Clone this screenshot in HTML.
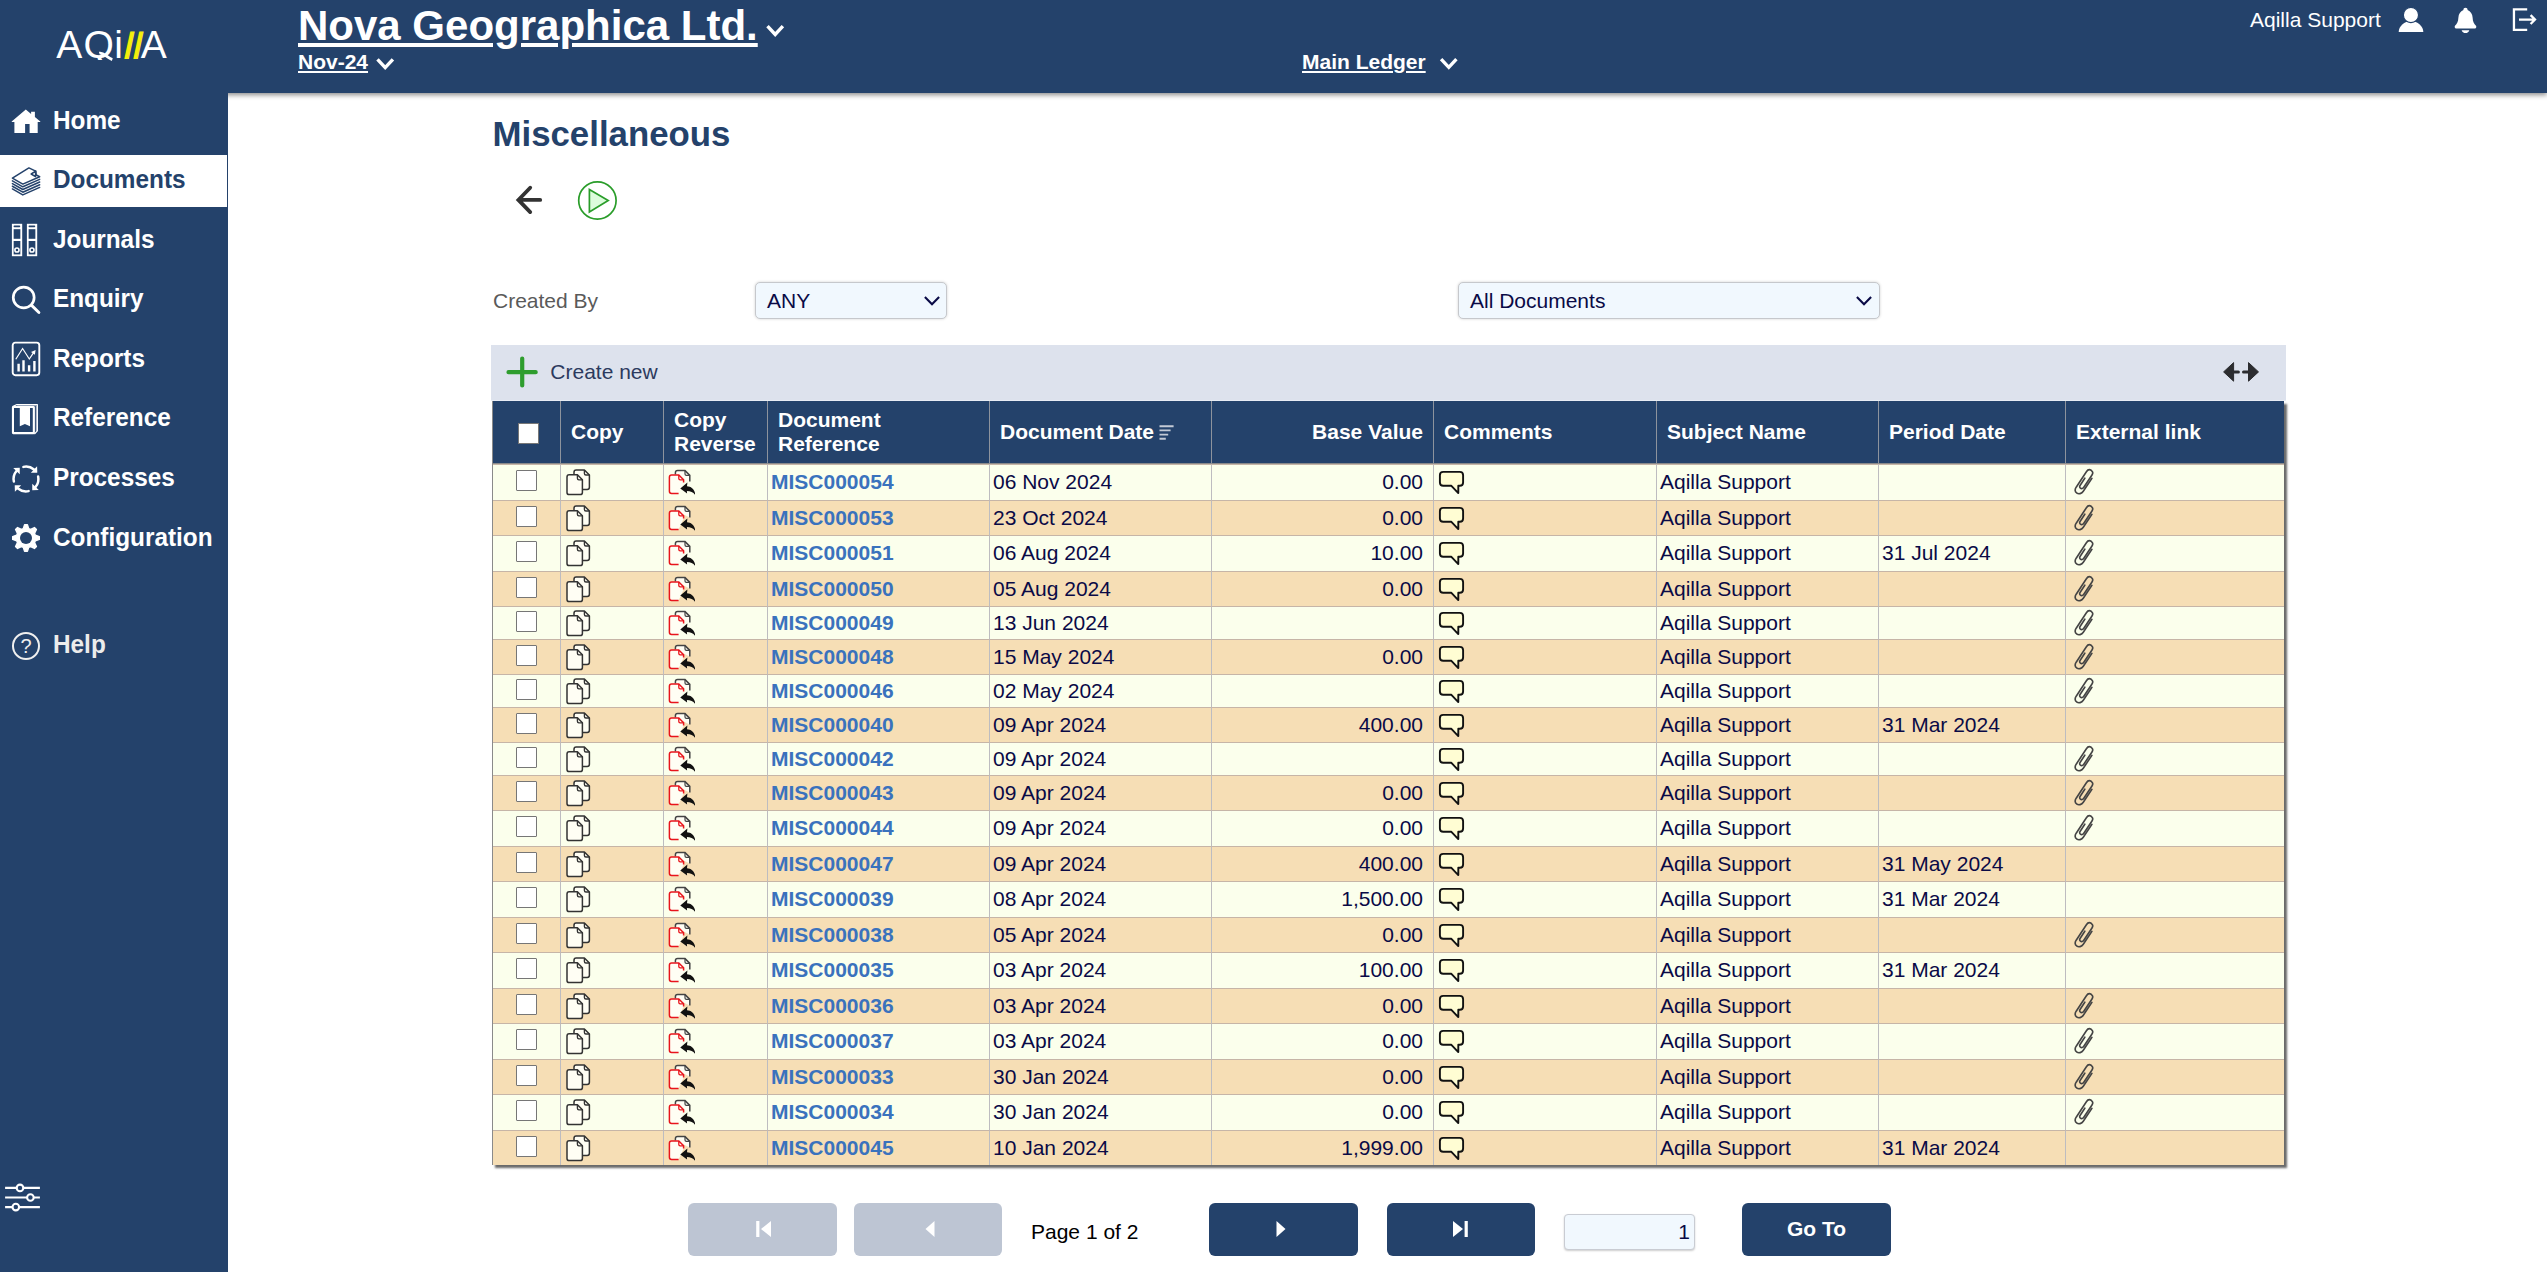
<!DOCTYPE html>
<html lang="en"><head><meta charset="utf-8"><title>Miscellaneous - Aqilla</title>
<style>
html,body{margin:0;padding:0}
body{width:2547px;height:1272px;overflow:hidden;background:#fff;font-family:"Liberation Sans",Arial,Helvetica,sans-serif;font-size:21px;color:#0a0a46;position:relative}
a{text-decoration:none;color:inherit}
svg{display:block}
#top{position:absolute;left:0;top:0;width:2547px;height:93px;background:#24426b;box-shadow:0 2px 5px rgba(0,0,0,.46);z-index:2;color:#fff}
#side{position:absolute;left:0;top:0;width:228px;height:1272px;background:#24426b;z-index:3;color:#fff}
#top svg,#side svg{position:absolute}
.company{position:absolute;left:298px;top:2px;font-size:42px;font-weight:bold;line-height:48px;text-decoration:underline;text-decoration-thickness:4px;text-underline-offset:3px;color:#fff;white-space:nowrap}
.period{position:absolute;left:298px;top:50px;font-size:21px;font-weight:bold;line-height:24px;text-decoration:underline;text-decoration-thickness:2px;text-underline-offset:2px;color:#fff}
.ledger{position:absolute;left:1302px;top:50px;font-size:21px;font-weight:bold;line-height:24px;text-decoration:underline;text-decoration-thickness:2px;text-underline-offset:2px;color:#fff;white-space:nowrap}
.user{position:absolute;left:2250px;top:8px;font-size:21px;line-height:24px;color:#fff;white-space:nowrap}
.logo{position:absolute;left:56px;top:24.4px;width:120px;height:35.2px;overflow:hidden;font-size:39px;line-height:42px;color:#fff;white-space:nowrap}
.logo span{position:absolute;top:0}
.logo .sl{color:#f4ef0c;-webkit-text-stroke:1.3px #f4ef0c;transform:skewX(4.6deg) scaleY(0.915);transform-origin:0 34.5px}
.nav{position:absolute;left:0;width:227px;height:52px;display:block;color:#fff}
.nav span{position:absolute;left:53px;top:-1px;line-height:52px;font-size:24.35px;font-weight:bold;white-space:nowrap;transform:scaleY(1.035);transform-origin:0 66%}
.nav.active{background:#fff;color:#24426b}
.nav.help{color:#ececec}
.title{position:absolute;left:492.5px;top:113px;margin:0;font-size:34.8px;line-height:42px;font-weight:bold;color:#24426b;white-space:nowrap}
.abs{position:absolute}
.lbl{position:absolute;left:493px;top:289px;line-height:24px;color:#5a5a5a;font-size:21px}
.sel{position:absolute;top:282px;height:37px;border:1px solid #c6c8cc;border-radius:5px;background:#f1f8fe;box-shadow:0 0 3px rgba(0,0,0,.18);box-sizing:border-box}
.sel span{position:absolute;left:11px;top:0;line-height:36px;font-size:21px;color:#0a0a46}
.sel svg{position:absolute;right:5px;top:12px}
.toolbar{position:absolute;left:491px;top:345px;width:1795px;height:55px;background:#dde2ed;border-bottom:1px solid #e8ecf4}
.toolbar .cn{position:absolute;left:59.3px;top:0;line-height:54px;color:#2c3a5e;font-size:21px}
.toolbar svg{position:absolute}
.grid{position:absolute;left:492px;top:401px;width:1791px;height:764px;border-left:1px solid #8a8a8a;box-shadow:2.5px 2.5px 2px #6a6a6a;background:#24426b}
.hrow{position:absolute;left:0;top:0;width:1791px;height:63px;background:#24426b;color:#fff;font-weight:bold;font-size:21px}
.hc{position:absolute;top:0;height:63px;box-sizing:border-box;border-left:1px solid #8d939d;border-bottom:1px solid #8a8a8a;display:flex;align-items:center;padding-left:10px;padding-bottom:0;line-height:24.3px}
.hc:first-child{border-left:0}
.hc.r{justify-content:flex-end;padding-right:10px}
.hcb{display:block;width:19px;height:19px;background:#fff;border:1px solid #777;margin-left:15px;margin-top:2px}
.ht svg{display:inline-block;margin-left:5px;vertical-align:-2px}
.row{position:absolute;left:0;width:1791px;white-space:nowrap}
.row.a{background:#fbffec}
.row.b{background:#f6deb5}
.c{position:absolute;top:0;height:100%;box-sizing:border-box;border-left:1px solid #bdbcc0;border-top:1px solid #c6b5a7;padding-left:3px;overflow:hidden}
.c0{border-left:0}
.c5{text-align:right;padding-right:10px}
.c svg{position:absolute}
.cb{position:absolute;left:23px;top:5px;width:19px;height:19px;background:#fff;border:1px solid #767676;border-radius:1px}
.ref{color:#3a72bd;font-weight:bold}
.pbtn{position:absolute;top:1203px;width:148px;height:53px;border-radius:6px;background:#24426b;color:#fff}
.pbtn.dis{background:#bdc5d3}
.pbtn svg{position:absolute}
.goto{position:absolute;left:0;width:149px;text-align:center;line-height:51px;font-weight:bold;font-size:21px}
.pg{position:absolute;left:1031px;top:1220px;line-height:24px;color:#000;white-space:nowrap}
.pin{position:absolute;left:1564px;top:1214px;width:131px;height:36px;box-sizing:border-box;border:1px solid #c9ccd3;border-radius:4px;background:#f1f8fe;box-shadow:0 1px 2px rgba(0,0,0,.2);text-align:right;padding-right:4px;line-height:33px;color:#0a0a46}

.row.s svg,.row.s .cb{margin-top:-1px}

</style></head>
<body>
<div id="top">
<a class="company" href="#">Nova Geographica Ltd.</a><svg style="left:764px;top:23px" width="24" height="18" viewBox="764 23 24 18"><path d="M767.5 26.2 L775.2 34.5 L782.9 26.2" fill="none" stroke="#fff" stroke-width="3.4" stroke-linecap="butt" stroke-linejoin="miter"/></svg>
<a class="period" href="#">Nov-24</a><svg style="left:374px;top:56px" width="24" height="18" viewBox="374 56 24 18"><path d="M377.5 59.3 L385.2 67.6 L392.9 59.3" fill="none" stroke="#fff" stroke-width="3.4" stroke-linecap="butt" stroke-linejoin="miter"/></svg>
<a class="ledger" href="#">Main Ledger</a><svg style="left:1438px;top:56px" width="24" height="18" viewBox="1438 56 24 18"><path d="M1441.1 59.2 L1448.8 67.3 L1456.4 59.2" fill="none" stroke="#fff" stroke-width="3.4" stroke-linecap="butt" stroke-linejoin="miter"/></svg>
<span class="user">Aqilla Support</span>
<svg style="left:2396px;top:4px" width="30" height="30" viewBox="2396 4 30 30"><path d="M2398.7 32.1 A12.3 10.8 0 0 1 2423.3 32.1 Z" fill="#fff"/><circle cx="2410.95" cy="14.95" r="7.6" fill="#fff" stroke="#24426b" stroke-width="1.2"/></svg><svg style="left:2452px;top:5px" width="28" height="30" viewBox="2452 5 28 30"><path d="M2465.5 7.8 C2466.8 7.8 2467.6 8.7 2467.6 9.9 C2470.6 11 2472.4 13.9 2472.6 17.6 C2472.8 22 2474 24 2476 25.8 C2476.6 26.4 2476.4 28.4 2475.2 28.4 L2455.8 28.4 C2454.6 28.4 2454.4 26.4 2455 25.8 C2457 24 2458.2 22 2458.4 17.6 C2458.6 13.9 2460.4 11 2463.4 9.9 C2463.4 8.7 2464.2 7.8 2465.5 7.8 Z" fill="#fff"/><path d="M2461.6 30.2 L2469.3 30.2 C2468.8 32 2467.4 33.1 2465.5 33.1 C2463.6 33.1 2462.2 32 2461.6 30.2 Z" fill="#fff"/></svg><svg style="left:2510px;top:5px" width="30" height="30" viewBox="2510 5 30 30"><path d="M2527.2 9.35 H2513.95 V29.95 H2527.2" fill="none" stroke="#fff" stroke-width="2.3"/><path d="M2519 19.55 H2534.4 M2530.6 15.1 L2535 19.55 L2530.6 24" fill="none" stroke="#fff" stroke-width="2.3"/></svg></div>
<div id="side">
<div class="logo"><span style="left:0.2px">A</span><span style="left:27.4px">Q</span><span style="left:58.3px">i</span><span class="sl" style="left:68.9px">/</span><span class="sl" style="left:78px">/</span><span style="left:84.7px">A</span></div>
<svg style="left:96px;top:50px" width="20" height="14" viewBox="96 50 20 14"><path d="M99.3 53.2 C103.5 52 106.5 57.5 112.3 59.6" fill="none" stroke="#fff" stroke-width="2.9"/></svg>
<a class="nav" style="top:95.5px" href="#"><span>Home</span></a>
<a class="nav active" style="top:155.0px" href="#"><span>Documents</span></a>
<a class="nav" style="top:214.5px" href="#"><span>Journals</span></a>
<a class="nav" style="top:274.0px" href="#"><span>Enquiry</span></a>
<a class="nav" style="top:333.5px" href="#"><span>Reports</span></a>
<a class="nav" style="top:393.0px" href="#"><span>Reference</span></a>
<a class="nav" style="top:453.0px" href="#"><span>Processes</span></a>
<a class="nav" style="top:513.0px" href="#"><span>Configuration</span></a>
<a class="nav help" style="top:620px" href="#"><span>Help</span></a>
<svg style="left:11px;top:108px" width="31" height="26" viewBox="0 0 31 26"><path d="M14.8 1.5 L20.1 5.9 V3.7 H23.9 V9.1 L29.3 13.6 V14.1 H26.7 V25 H18.6 V16.1 H14.1 V25 H3.4 V14.1 H0.7 V13.6 Z" fill="#fff"/></svg>
<svg style="left:11px;top:165.5px" width="31" height="31" viewBox="0 0 31 31"><path d="M1.4 12.2 L17.9 1.9 L24.7 5.1 L25.2 9 L28.7 10.7 L11.8 18.1 Z" fill="#fff" stroke="#24426b" stroke-width="1.5" stroke-linejoin="round"/><path d="M24.7 5.1 L20.2 8 L24.5 10.6 Z" fill="#fff" stroke="#24426b" stroke-width="1.5" stroke-linejoin="round"/><path d="M1.4 14.88 L11.8 20.80 L28.7 13.38" fill="none" stroke="#24426b" stroke-width="1.5" stroke-linejoin="round" stroke-linecap="round"/><path d="M1.4 17.56 L11.8 23.50 L28.7 16.06" fill="none" stroke="#24426b" stroke-width="1.5" stroke-linejoin="round" stroke-linecap="round"/><path d="M1.4 20.24 L11.8 26.20 L28.7 18.74" fill="none" stroke="#24426b" stroke-width="1.5" stroke-linejoin="round" stroke-linecap="round"/><path d="M1.4 22.92 L11.8 28.90 L28.7 21.42" fill="none" stroke="#24426b" stroke-width="1.5" stroke-linejoin="round" stroke-linecap="round"/></svg>
<svg style="left:10px;top:223px" width="30" height="35" viewBox="0 0 30 35"><rect x="1.90" y="0.80" width="10.3" height="32.4" fill="#fff"/><rect x="3.60" y="2.60" width="6.6" height="1.6" rx="0.7" fill="#24426b"/><rect x="3.65" y="6.20" width="6.7" height="9.6" fill="#24426b"/><rect x="3.65" y="18.00" width="6.7" height="13.4" fill="#24426b"/><circle cx="6.95" cy="27.00" r="2.05" fill="#24426b" stroke="#fff" stroke-width="1.6"/><rect x="16.90" y="0.80" width="10.3" height="32.4" fill="#fff"/><rect x="18.60" y="2.60" width="6.6" height="1.6" rx="0.7" fill="#24426b"/><rect x="18.65" y="6.20" width="6.7" height="9.6" fill="#24426b"/><rect x="18.65" y="18.00" width="6.7" height="13.4" fill="#24426b"/><circle cx="21.95" cy="27.00" r="2.05" fill="#24426b" stroke="#fff" stroke-width="1.6"/></svg>
<svg style="left:10px;top:284px" width="32" height="32" viewBox="0 0 32 32"><circle cx="13.7" cy="13.5" r="10.45" fill="none" stroke="#fff" stroke-width="2.7"/><path d="M21.6 21.4 L28.9 28.5" stroke="#fff" stroke-width="2.9" stroke-linecap="round"/></svg>
<svg style="left:11px;top:341px" width="30" height="36" viewBox="0 0 30 36"><rect x="1.7" y="1.6" width="26.6" height="32.6" rx="2.6" fill="none" stroke="#fff" stroke-width="1.9"/><path d="M7.6 30.4 V22.8 M12.5 30.4 V19.2 M18.1 30.4 V24.2 M23.4 30.4 V20" stroke="#fff" stroke-width="2.4" fill="none"/><path d="M4.8 18.3 L11.6 7.5 L18.3 18 L22.6 11.6" stroke="#fff" stroke-width="1.2" fill="none"/><path d="M24.6 9 L23.9 13.8 L20 11 Z" fill="#fff"/></svg>
<svg style="left:11px;top:403px" width="29" height="33" viewBox="0 0 29 33"><path d="M6.2 2.2 H25.2 M25.4 2.6 V28.2" fill="none" stroke="#93a1b8" stroke-width="1.3"/><path d="M1.6 3.6 L5.9 1.5 H26.35 V27.9 L23.4 31" fill="none" stroke="#fff" stroke-width="1.25" stroke-linejoin="round"/><rect x="1.95" y="3.95" width="20.9" height="26.15" rx="0.3" fill="#24426b" stroke="#fff" stroke-width="2.1"/><path d="M8.8 4.6 H19 V23.2 L13.9 20.9 L8.8 23.2 Z" fill="#fff"/></svg>
<svg style="left:9.96px;top:462.8px" width="32" height="32" viewBox="0 0 32 32"><path d="M13.42 3.87 A12.4 12.4 0 0 1 23.97 6.50" fill="none" stroke="#fff" stroke-width="2.5" stroke-linecap="round"/><path d="M27.28 9.75 L27.09 3.25 L20.81 9.73 Z" fill="#fff"/><path d="M28.13 13.42 A12.4 12.4 0 0 1 25.50 23.97" fill="none" stroke="#fff" stroke-width="2.5" stroke-linecap="round"/><path d="M22.25 27.28 L28.75 27.09 L22.27 20.81 Z" fill="#fff"/><path d="M18.58 28.13 A12.4 12.4 0 0 1 8.03 25.50" fill="none" stroke="#fff" stroke-width="2.5" stroke-linecap="round"/><path d="M4.72 22.25 L4.91 28.75 L11.19 22.27 Z" fill="#fff"/><path d="M3.87 18.58 A12.4 12.4 0 0 1 6.50 8.03" fill="none" stroke="#fff" stroke-width="2.5" stroke-linecap="round"/><path d="M9.75 4.72 L3.25 4.91 L9.73 11.19 Z" fill="#fff"/></svg>
<svg style="left:10.06px;top:521.87px" width="32" height="32" viewBox="0 0 32 32"><path d="M13.23 6.65 L14.55 2.63 L17.45 2.63 L18.77 6.65 L20.65 7.43 L24.43 5.52 L26.48 7.57 L24.57 11.35 L25.35 13.23 L29.37 14.55 L29.37 17.45 L25.35 18.77 L24.57 20.65 L26.48 24.43 L24.43 26.48 L20.65 24.57 L18.77 25.35 L17.45 29.37 L14.55 29.37 L13.23 25.35 L11.35 24.57 L7.57 26.48 L5.52 24.43 L7.43 20.65 L6.65 18.77 L2.63 17.45 L2.63 14.55 L6.65 13.23 L7.43 11.35 L5.52 7.57 L7.57 5.52 L11.35 7.43 Z" fill="#fff" stroke="#fff" stroke-width="1.3" stroke-linejoin="round"/><circle cx="16" cy="16" r="6" fill="#24426b"/></svg>
<svg style="left:11px;top:631px" width="30" height="30" viewBox="0 0 30 30"><circle cx="15" cy="15" r="13" fill="none" stroke="#efefef" stroke-width="2"/><text x="15" y="22" text-anchor="middle" font-family="Liberation Sans, Arial, sans-serif" font-size="20" fill="#efefef">?</text></svg>
<svg style="left:3px;top:1180px" width="40" height="36" viewBox="0 0 40 36"><path d="M2.1 7.9 H36.9 M2.1 17.5 H36.9 M2.1 27.1 H36.9" stroke="#fff" stroke-width="2.2" fill="none"/><circle cx="17" cy="7.9" r="3.3" fill="#24426b" stroke="#fff" stroke-width="2.1"/><circle cx="27.4" cy="17.5" r="3.3" fill="#24426b" stroke="#fff" stroke-width="2.1"/><circle cx="12.8" cy="27.1" r="3.3" fill="#24426b" stroke="#fff" stroke-width="2.1"/></svg></div>
<h1 class="title">Miscellaneous</h1>
<svg class="abs" style="left:510px;top:180px" width="40" height="40" viewBox="510 180 40 40"><path d="M540.2 199.9 H519 M530.2 187.7 L518.4 199.9 L530.2 212.1" fill="none" stroke="#333" stroke-width="3.8" stroke-linecap="round" stroke-linejoin="miter"/></svg><svg class="abs" style="left:574px;top:178px" width="46" height="46" viewBox="574 178 46 46"><circle cx="597.4" cy="200.5" r="18.7" fill="#fff" stroke="#2a9d2a" stroke-width="1.7"/><path d="M589.4 189.4 L608.2 200.5 L589.4 211.9 Z" fill="#dcfcdc" stroke="#2a9d2a" stroke-width="1.7" stroke-linejoin="miter"/></svg><label class="lbl">Created By</label>
<div class="sel" style="left:755px;width:192px"><span>ANY</span><svg width="20" height="12" viewBox="0 0 20 12"><path d="M3.9 2 L11 9.2 L18.1 2" fill="none" stroke="#0a0a46" stroke-width="2.1" stroke-linecap="butt" stroke-linejoin="miter"/></svg></div>
<div class="sel" style="left:1458px;width:422px"><span>All Documents</span><svg style="right:6px" width="20" height="12" viewBox="0 0 20 12"><path d="M3.9 2 L11 9.2 L18.1 2" fill="none" stroke="#0a0a46" stroke-width="2.1" stroke-linecap="butt" stroke-linejoin="miter"/></svg></div>
<div class="toolbar"><svg style="left:14px;top:10px" width="34" height="34" viewBox="0 0 34 34"><path d="M17.2 3.5 V30.5 M3.5 17.2 H30.7" stroke="#2e9d2e" stroke-width="4.2" stroke-linecap="round" fill="none"/></svg><span class="cn">Create new</span><svg style="left:1728px;top:13px" width="44" height="28" viewBox="1728 13 44 28"><path d="M1732.6 26.9 L1742.6 17.6 V36.2 Z M1767.5 26.9 L1757.5 17.6 V36.2 Z" fill="#2c2d30" stroke="#2c2d30" stroke-width="1" stroke-linejoin="round"/><path d="M1742 26.9 H1747.4 M1752.5 26.9 H1758" stroke="#2c2d30" stroke-width="3" stroke-linecap="round"/></svg></div>
<div class="grid">
<div class="hrow">
<div class="hc" style="left:0px;width:67px"><span class="hcb"></span></div><div class="hc" style="left:67px;width:103px"><span class="ht">Copy</span></div><div class="hc" style="left:170px;width:104px"><span class="ht">Copy<br>Reverse</span></div><div class="hc" style="left:274px;width:222px"><span class="ht">Document<br>Reference</span></div><div class="hc" style="left:496px;width:222px"><span class="ht">Document Date<svg width="15" height="16" viewBox="0 0 15 16"><path d="M0.5 1.2 H14.6 M0.5 5.4 H11.6 M0.5 9.6 H9.2 M0.5 13.8 H6.8" stroke="#c3cad6" stroke-width="1.9" fill="none"/></svg></span></div><div class="hc r" style="left:718px;width:222px"><span class="ht">Base Value</span></div><div class="hc" style="left:940px;width:223px"><span class="ht">Comments</span></div><div class="hc" style="left:1163px;width:222px"><span class="ht">Subject Name</span></div><div class="hc" style="left:1385px;width:187px"><span class="ht">Period Date</span></div><div class="hc" style="left:1572px;width:219px"><span class="ht">External link</span></div>
</div>
<div class="row a" style="top:63px;height:36px;line-height:34.6px"><div class="c c0" style="left:0px;width:67px"><span class="cb"></span></div><div class="c c1" style="left:67px;width:103px"><svg style="left:3.3px;top:2px" width="28" height="30" viewBox="0 0 28 30"><path d="M12.2 3.0 H20.4 L25.4 8.0 V20.3 Q25.4 22.5 23.2 22.5 H12.2 Q10.0 22.5 10.0 20.3 V5.2 Q10.0 3.0 12.2 3.0 Z" fill="#fffef4" stroke="#333" stroke-width="1.5" stroke-linejoin="round"/><path d="M20.4 3.0 V6.5 Q20.4 8.0 21.9 8.0 H25.4" fill="none" stroke="#333" stroke-width="1.35"/><path d="M5.2 7.8 H13.4 L18.4 12.8 V25.4 Q18.4 27.6 16.2 27.6 H5.2 Q3.0 27.6 3.0 25.4 V10.0 Q3.0 7.8 5.2 7.8 Z" fill="#fffef4" stroke="#333" stroke-width="1.5" stroke-linejoin="round"/><path d="M13.4 7.8 V11.3 Q13.4 12.8 14.9 12.8 H18.4" fill="none" stroke="#333" stroke-width="1.35"/></svg></div><div class="c c2" style="left:170px;width:104px"><svg style="left:-1.5px;top:1.5px" width="32" height="30" viewBox="0 0 32 30"><path d="M12.4 7.4 V5.8 Q12.4 3.6 14.6 3.6 H22 L26.8 8.4 V14.6" fill="#fffef4" stroke="#444" stroke-width="1.5"/><path d="M22 3.6 V7 Q22 8.4 23.4 8.4 H26.8" fill="none" stroke="#444" stroke-width="1.2"/><path d="M15.6 26.5 H8.6 Q6.4 26.5 6.4 24.3 V10.2 Q6.4 8 8.6 8 H15.8 L20.6 12.8 V15.6" fill="#fffef4" stroke="#e8141c" stroke-width="1.5"/><path d="M15.8 8 V11.4 Q15.8 12.8 17.2 12.8 H20.6" fill="none" stroke="#e8141c" stroke-width="1.3"/><path d="M17.3 21.4 L24.4 15.5 L24 19.2 C28.4 19.5 32 22.4 32.3 28.3 C30.4 25.2 27.8 24 23.9 24 L24.1 26.6 Z" fill="#111"/></svg></div><div class="c c3" style="left:274px;width:222px"><a class="ref" href="#">MISC000054</a></div><div class="c c4" style="left:496px;width:222px">06 Nov 2024</div><div class="c c5" style="left:718px;width:222px">0.00</div><div class="c c6" style="left:940px;width:223px"><svg style="left:3px;top:4px" width="32" height="30" viewBox="0 0 32 30"><path d="M6.2 2.9 H22.8 Q26.1 2.9 26.1 6.2 V13.5 Q26.1 16.8 22.8 16.8 H21.3 V24.1 L14.4 16.8 H6.2 Q2.9 16.8 2.9 13.5 V6.2 Q2.9 2.9 6.2 2.9 Z" fill="#fffdd3" stroke="#111" stroke-width="1.9" stroke-linejoin="round"/></svg></div><div class="c c7" style="left:1163px;width:222px">Aqilla Support</div><div class="c c8" style="left:1385px;width:187px"></div><div class="c c9" style="left:1572px;width:219px"><svg style="left:1.5px;top:2.4px" width="26" height="30" viewBox="0 0 26 30"><path d="M23.9 11.4 L15.3 24.2 C13.6 26.8 10.6 27.4 8.9 26.2 C7 24.9 6.7 22.6 8.2 20.2 L18.4 4.7 C19.6 2.8 21.6 2.3 23.2 3.3 C24.8 4.4 25.1 6.3 24 8 L15.8 20.2 C14.9 21.6 13.4 22 12.4 21.2 C11.5 20.5 11.5 19.4 12.2 18.3 L16.8 11.2" fill="none" stroke="#444" stroke-width="1.6" stroke-linecap="round"/></svg></div></div>
<div class="row b" style="top:99px;height:35px;line-height:33.6px"><div class="c c0" style="left:0px;width:67px"><span class="cb"></span></div><div class="c c1" style="left:67px;width:103px"><svg style="left:3.3px;top:2px" width="28" height="30" viewBox="0 0 28 30"><path d="M12.2 3.0 H20.4 L25.4 8.0 V20.3 Q25.4 22.5 23.2 22.5 H12.2 Q10.0 22.5 10.0 20.3 V5.2 Q10.0 3.0 12.2 3.0 Z" fill="#fffef4" stroke="#333" stroke-width="1.5" stroke-linejoin="round"/><path d="M20.4 3.0 V6.5 Q20.4 8.0 21.9 8.0 H25.4" fill="none" stroke="#333" stroke-width="1.35"/><path d="M5.2 7.8 H13.4 L18.4 12.8 V25.4 Q18.4 27.6 16.2 27.6 H5.2 Q3.0 27.6 3.0 25.4 V10.0 Q3.0 7.8 5.2 7.8 Z" fill="#fffef4" stroke="#333" stroke-width="1.5" stroke-linejoin="round"/><path d="M13.4 7.8 V11.3 Q13.4 12.8 14.9 12.8 H18.4" fill="none" stroke="#333" stroke-width="1.35"/></svg></div><div class="c c2" style="left:170px;width:104px"><svg style="left:-1.5px;top:1.5px" width="32" height="30" viewBox="0 0 32 30"><path d="M12.4 7.4 V5.8 Q12.4 3.6 14.6 3.6 H22 L26.8 8.4 V14.6" fill="#fffef4" stroke="#444" stroke-width="1.5"/><path d="M22 3.6 V7 Q22 8.4 23.4 8.4 H26.8" fill="none" stroke="#444" stroke-width="1.2"/><path d="M15.6 26.5 H8.6 Q6.4 26.5 6.4 24.3 V10.2 Q6.4 8 8.6 8 H15.8 L20.6 12.8 V15.6" fill="#fffef4" stroke="#e8141c" stroke-width="1.5"/><path d="M15.8 8 V11.4 Q15.8 12.8 17.2 12.8 H20.6" fill="none" stroke="#e8141c" stroke-width="1.3"/><path d="M17.3 21.4 L24.4 15.5 L24 19.2 C28.4 19.5 32 22.4 32.3 28.3 C30.4 25.2 27.8 24 23.9 24 L24.1 26.6 Z" fill="#111"/></svg></div><div class="c c3" style="left:274px;width:222px"><a class="ref" href="#">MISC000053</a></div><div class="c c4" style="left:496px;width:222px">23 Oct 2024</div><div class="c c5" style="left:718px;width:222px">0.00</div><div class="c c6" style="left:940px;width:223px"><svg style="left:3px;top:4px" width="32" height="30" viewBox="0 0 32 30"><path d="M6.2 2.9 H22.8 Q26.1 2.9 26.1 6.2 V13.5 Q26.1 16.8 22.8 16.8 H21.3 V24.1 L14.4 16.8 H6.2 Q2.9 16.8 2.9 13.5 V6.2 Q2.9 2.9 6.2 2.9 Z" fill="#fffdd3" stroke="#111" stroke-width="1.9" stroke-linejoin="round"/></svg></div><div class="c c7" style="left:1163px;width:222px">Aqilla Support</div><div class="c c8" style="left:1385px;width:187px"></div><div class="c c9" style="left:1572px;width:219px"><svg style="left:1.5px;top:2.4px" width="26" height="30" viewBox="0 0 26 30"><path d="M23.9 11.4 L15.3 24.2 C13.6 26.8 10.6 27.4 8.9 26.2 C7 24.9 6.7 22.6 8.2 20.2 L18.4 4.7 C19.6 2.8 21.6 2.3 23.2 3.3 C24.8 4.4 25.1 6.3 24 8 L15.8 20.2 C14.9 21.6 13.4 22 12.4 21.2 C11.5 20.5 11.5 19.4 12.2 18.3 L16.8 11.2" fill="none" stroke="#444" stroke-width="1.6" stroke-linecap="round"/></svg></div></div>
<div class="row a" style="top:134px;height:36px;line-height:34.6px"><div class="c c0" style="left:0px;width:67px"><span class="cb"></span></div><div class="c c1" style="left:67px;width:103px"><svg style="left:3.3px;top:2px" width="28" height="30" viewBox="0 0 28 30"><path d="M12.2 3.0 H20.4 L25.4 8.0 V20.3 Q25.4 22.5 23.2 22.5 H12.2 Q10.0 22.5 10.0 20.3 V5.2 Q10.0 3.0 12.2 3.0 Z" fill="#fffef4" stroke="#333" stroke-width="1.5" stroke-linejoin="round"/><path d="M20.4 3.0 V6.5 Q20.4 8.0 21.9 8.0 H25.4" fill="none" stroke="#333" stroke-width="1.35"/><path d="M5.2 7.8 H13.4 L18.4 12.8 V25.4 Q18.4 27.6 16.2 27.6 H5.2 Q3.0 27.6 3.0 25.4 V10.0 Q3.0 7.8 5.2 7.8 Z" fill="#fffef4" stroke="#333" stroke-width="1.5" stroke-linejoin="round"/><path d="M13.4 7.8 V11.3 Q13.4 12.8 14.9 12.8 H18.4" fill="none" stroke="#333" stroke-width="1.35"/></svg></div><div class="c c2" style="left:170px;width:104px"><svg style="left:-1.5px;top:1.5px" width="32" height="30" viewBox="0 0 32 30"><path d="M12.4 7.4 V5.8 Q12.4 3.6 14.6 3.6 H22 L26.8 8.4 V14.6" fill="#fffef4" stroke="#444" stroke-width="1.5"/><path d="M22 3.6 V7 Q22 8.4 23.4 8.4 H26.8" fill="none" stroke="#444" stroke-width="1.2"/><path d="M15.6 26.5 H8.6 Q6.4 26.5 6.4 24.3 V10.2 Q6.4 8 8.6 8 H15.8 L20.6 12.8 V15.6" fill="#fffef4" stroke="#e8141c" stroke-width="1.5"/><path d="M15.8 8 V11.4 Q15.8 12.8 17.2 12.8 H20.6" fill="none" stroke="#e8141c" stroke-width="1.3"/><path d="M17.3 21.4 L24.4 15.5 L24 19.2 C28.4 19.5 32 22.4 32.3 28.3 C30.4 25.2 27.8 24 23.9 24 L24.1 26.6 Z" fill="#111"/></svg></div><div class="c c3" style="left:274px;width:222px"><a class="ref" href="#">MISC000051</a></div><div class="c c4" style="left:496px;width:222px">06 Aug 2024</div><div class="c c5" style="left:718px;width:222px">10.00</div><div class="c c6" style="left:940px;width:223px"><svg style="left:3px;top:4px" width="32" height="30" viewBox="0 0 32 30"><path d="M6.2 2.9 H22.8 Q26.1 2.9 26.1 6.2 V13.5 Q26.1 16.8 22.8 16.8 H21.3 V24.1 L14.4 16.8 H6.2 Q2.9 16.8 2.9 13.5 V6.2 Q2.9 2.9 6.2 2.9 Z" fill="#fffdd3" stroke="#111" stroke-width="1.9" stroke-linejoin="round"/></svg></div><div class="c c7" style="left:1163px;width:222px">Aqilla Support</div><div class="c c8" style="left:1385px;width:187px">31 Jul 2024</div><div class="c c9" style="left:1572px;width:219px"><svg style="left:1.5px;top:2.4px" width="26" height="30" viewBox="0 0 26 30"><path d="M23.9 11.4 L15.3 24.2 C13.6 26.8 10.6 27.4 8.9 26.2 C7 24.9 6.7 22.6 8.2 20.2 L18.4 4.7 C19.6 2.8 21.6 2.3 23.2 3.3 C24.8 4.4 25.1 6.3 24 8 L15.8 20.2 C14.9 21.6 13.4 22 12.4 21.2 C11.5 20.5 11.5 19.4 12.2 18.3 L16.8 11.2" fill="none" stroke="#444" stroke-width="1.6" stroke-linecap="round"/></svg></div></div>
<div class="row b" style="top:170px;height:35px;line-height:33.6px"><div class="c c0" style="left:0px;width:67px"><span class="cb"></span></div><div class="c c1" style="left:67px;width:103px"><svg style="left:3.3px;top:2px" width="28" height="30" viewBox="0 0 28 30"><path d="M12.2 3.0 H20.4 L25.4 8.0 V20.3 Q25.4 22.5 23.2 22.5 H12.2 Q10.0 22.5 10.0 20.3 V5.2 Q10.0 3.0 12.2 3.0 Z" fill="#fffef4" stroke="#333" stroke-width="1.5" stroke-linejoin="round"/><path d="M20.4 3.0 V6.5 Q20.4 8.0 21.9 8.0 H25.4" fill="none" stroke="#333" stroke-width="1.35"/><path d="M5.2 7.8 H13.4 L18.4 12.8 V25.4 Q18.4 27.6 16.2 27.6 H5.2 Q3.0 27.6 3.0 25.4 V10.0 Q3.0 7.8 5.2 7.8 Z" fill="#fffef4" stroke="#333" stroke-width="1.5" stroke-linejoin="round"/><path d="M13.4 7.8 V11.3 Q13.4 12.8 14.9 12.8 H18.4" fill="none" stroke="#333" stroke-width="1.35"/></svg></div><div class="c c2" style="left:170px;width:104px"><svg style="left:-1.5px;top:1.5px" width="32" height="30" viewBox="0 0 32 30"><path d="M12.4 7.4 V5.8 Q12.4 3.6 14.6 3.6 H22 L26.8 8.4 V14.6" fill="#fffef4" stroke="#444" stroke-width="1.5"/><path d="M22 3.6 V7 Q22 8.4 23.4 8.4 H26.8" fill="none" stroke="#444" stroke-width="1.2"/><path d="M15.6 26.5 H8.6 Q6.4 26.5 6.4 24.3 V10.2 Q6.4 8 8.6 8 H15.8 L20.6 12.8 V15.6" fill="#fffef4" stroke="#e8141c" stroke-width="1.5"/><path d="M15.8 8 V11.4 Q15.8 12.8 17.2 12.8 H20.6" fill="none" stroke="#e8141c" stroke-width="1.3"/><path d="M17.3 21.4 L24.4 15.5 L24 19.2 C28.4 19.5 32 22.4 32.3 28.3 C30.4 25.2 27.8 24 23.9 24 L24.1 26.6 Z" fill="#111"/></svg></div><div class="c c3" style="left:274px;width:222px"><a class="ref" href="#">MISC000050</a></div><div class="c c4" style="left:496px;width:222px">05 Aug 2024</div><div class="c c5" style="left:718px;width:222px">0.00</div><div class="c c6" style="left:940px;width:223px"><svg style="left:3px;top:4px" width="32" height="30" viewBox="0 0 32 30"><path d="M6.2 2.9 H22.8 Q26.1 2.9 26.1 6.2 V13.5 Q26.1 16.8 22.8 16.8 H21.3 V24.1 L14.4 16.8 H6.2 Q2.9 16.8 2.9 13.5 V6.2 Q2.9 2.9 6.2 2.9 Z" fill="#fffdd3" stroke="#111" stroke-width="1.9" stroke-linejoin="round"/></svg></div><div class="c c7" style="left:1163px;width:222px">Aqilla Support</div><div class="c c8" style="left:1385px;width:187px"></div><div class="c c9" style="left:1572px;width:219px"><svg style="left:1.5px;top:2.4px" width="26" height="30" viewBox="0 0 26 30"><path d="M23.9 11.4 L15.3 24.2 C13.6 26.8 10.6 27.4 8.9 26.2 C7 24.9 6.7 22.6 8.2 20.2 L18.4 4.7 C19.6 2.8 21.6 2.3 23.2 3.3 C24.8 4.4 25.1 6.3 24 8 L15.8 20.2 C14.9 21.6 13.4 22 12.4 21.2 C11.5 20.5 11.5 19.4 12.2 18.3 L16.8 11.2" fill="none" stroke="#444" stroke-width="1.6" stroke-linecap="round"/></svg></div></div>
<div class="row a s" style="top:205px;height:33px;line-height:31.6px"><div class="c c0" style="left:0px;width:67px"><span class="cb"></span></div><div class="c c1" style="left:67px;width:103px"><svg style="left:3.3px;top:2px" width="28" height="30" viewBox="0 0 28 30"><path d="M12.2 3.0 H20.4 L25.4 8.0 V20.3 Q25.4 22.5 23.2 22.5 H12.2 Q10.0 22.5 10.0 20.3 V5.2 Q10.0 3.0 12.2 3.0 Z" fill="#fffef4" stroke="#333" stroke-width="1.5" stroke-linejoin="round"/><path d="M20.4 3.0 V6.5 Q20.4 8.0 21.9 8.0 H25.4" fill="none" stroke="#333" stroke-width="1.35"/><path d="M5.2 7.8 H13.4 L18.4 12.8 V25.4 Q18.4 27.6 16.2 27.6 H5.2 Q3.0 27.6 3.0 25.4 V10.0 Q3.0 7.8 5.2 7.8 Z" fill="#fffef4" stroke="#333" stroke-width="1.5" stroke-linejoin="round"/><path d="M13.4 7.8 V11.3 Q13.4 12.8 14.9 12.8 H18.4" fill="none" stroke="#333" stroke-width="1.35"/></svg></div><div class="c c2" style="left:170px;width:104px"><svg style="left:-1.5px;top:1.5px" width="32" height="30" viewBox="0 0 32 30"><path d="M12.4 7.4 V5.8 Q12.4 3.6 14.6 3.6 H22 L26.8 8.4 V14.6" fill="#fffef4" stroke="#444" stroke-width="1.5"/><path d="M22 3.6 V7 Q22 8.4 23.4 8.4 H26.8" fill="none" stroke="#444" stroke-width="1.2"/><path d="M15.6 26.5 H8.6 Q6.4 26.5 6.4 24.3 V10.2 Q6.4 8 8.6 8 H15.8 L20.6 12.8 V15.6" fill="#fffef4" stroke="#e8141c" stroke-width="1.5"/><path d="M15.8 8 V11.4 Q15.8 12.8 17.2 12.8 H20.6" fill="none" stroke="#e8141c" stroke-width="1.3"/><path d="M17.3 21.4 L24.4 15.5 L24 19.2 C28.4 19.5 32 22.4 32.3 28.3 C30.4 25.2 27.8 24 23.9 24 L24.1 26.6 Z" fill="#111"/></svg></div><div class="c c3" style="left:274px;width:222px"><a class="ref" href="#">MISC000049</a></div><div class="c c4" style="left:496px;width:222px">13 Jun 2024</div><div class="c c5" style="left:718px;width:222px"></div><div class="c c6" style="left:940px;width:223px"><svg style="left:3px;top:4px" width="32" height="30" viewBox="0 0 32 30"><path d="M6.2 2.9 H22.8 Q26.1 2.9 26.1 6.2 V13.5 Q26.1 16.8 22.8 16.8 H21.3 V24.1 L14.4 16.8 H6.2 Q2.9 16.8 2.9 13.5 V6.2 Q2.9 2.9 6.2 2.9 Z" fill="#fffdd3" stroke="#111" stroke-width="1.9" stroke-linejoin="round"/></svg></div><div class="c c7" style="left:1163px;width:222px">Aqilla Support</div><div class="c c8" style="left:1385px;width:187px"></div><div class="c c9" style="left:1572px;width:219px"><svg style="left:1.5px;top:2.4px" width="26" height="30" viewBox="0 0 26 30"><path d="M23.9 11.4 L15.3 24.2 C13.6 26.8 10.6 27.4 8.9 26.2 C7 24.9 6.7 22.6 8.2 20.2 L18.4 4.7 C19.6 2.8 21.6 2.3 23.2 3.3 C24.8 4.4 25.1 6.3 24 8 L15.8 20.2 C14.9 21.6 13.4 22 12.4 21.2 C11.5 20.5 11.5 19.4 12.2 18.3 L16.8 11.2" fill="none" stroke="#444" stroke-width="1.6" stroke-linecap="round"/></svg></div></div>
<div class="row b" style="top:238px;height:35px;line-height:33.6px"><div class="c c0" style="left:0px;width:67px"><span class="cb"></span></div><div class="c c1" style="left:67px;width:103px"><svg style="left:3.3px;top:2px" width="28" height="30" viewBox="0 0 28 30"><path d="M12.2 3.0 H20.4 L25.4 8.0 V20.3 Q25.4 22.5 23.2 22.5 H12.2 Q10.0 22.5 10.0 20.3 V5.2 Q10.0 3.0 12.2 3.0 Z" fill="#fffef4" stroke="#333" stroke-width="1.5" stroke-linejoin="round"/><path d="M20.4 3.0 V6.5 Q20.4 8.0 21.9 8.0 H25.4" fill="none" stroke="#333" stroke-width="1.35"/><path d="M5.2 7.8 H13.4 L18.4 12.8 V25.4 Q18.4 27.6 16.2 27.6 H5.2 Q3.0 27.6 3.0 25.4 V10.0 Q3.0 7.8 5.2 7.8 Z" fill="#fffef4" stroke="#333" stroke-width="1.5" stroke-linejoin="round"/><path d="M13.4 7.8 V11.3 Q13.4 12.8 14.9 12.8 H18.4" fill="none" stroke="#333" stroke-width="1.35"/></svg></div><div class="c c2" style="left:170px;width:104px"><svg style="left:-1.5px;top:1.5px" width="32" height="30" viewBox="0 0 32 30"><path d="M12.4 7.4 V5.8 Q12.4 3.6 14.6 3.6 H22 L26.8 8.4 V14.6" fill="#fffef4" stroke="#444" stroke-width="1.5"/><path d="M22 3.6 V7 Q22 8.4 23.4 8.4 H26.8" fill="none" stroke="#444" stroke-width="1.2"/><path d="M15.6 26.5 H8.6 Q6.4 26.5 6.4 24.3 V10.2 Q6.4 8 8.6 8 H15.8 L20.6 12.8 V15.6" fill="#fffef4" stroke="#e8141c" stroke-width="1.5"/><path d="M15.8 8 V11.4 Q15.8 12.8 17.2 12.8 H20.6" fill="none" stroke="#e8141c" stroke-width="1.3"/><path d="M17.3 21.4 L24.4 15.5 L24 19.2 C28.4 19.5 32 22.4 32.3 28.3 C30.4 25.2 27.8 24 23.9 24 L24.1 26.6 Z" fill="#111"/></svg></div><div class="c c3" style="left:274px;width:222px"><a class="ref" href="#">MISC000048</a></div><div class="c c4" style="left:496px;width:222px">15 May 2024</div><div class="c c5" style="left:718px;width:222px">0.00</div><div class="c c6" style="left:940px;width:223px"><svg style="left:3px;top:4px" width="32" height="30" viewBox="0 0 32 30"><path d="M6.2 2.9 H22.8 Q26.1 2.9 26.1 6.2 V13.5 Q26.1 16.8 22.8 16.8 H21.3 V24.1 L14.4 16.8 H6.2 Q2.9 16.8 2.9 13.5 V6.2 Q2.9 2.9 6.2 2.9 Z" fill="#fffdd3" stroke="#111" stroke-width="1.9" stroke-linejoin="round"/></svg></div><div class="c c7" style="left:1163px;width:222px">Aqilla Support</div><div class="c c8" style="left:1385px;width:187px"></div><div class="c c9" style="left:1572px;width:219px"><svg style="left:1.5px;top:2.4px" width="26" height="30" viewBox="0 0 26 30"><path d="M23.9 11.4 L15.3 24.2 C13.6 26.8 10.6 27.4 8.9 26.2 C7 24.9 6.7 22.6 8.2 20.2 L18.4 4.7 C19.6 2.8 21.6 2.3 23.2 3.3 C24.8 4.4 25.1 6.3 24 8 L15.8 20.2 C14.9 21.6 13.4 22 12.4 21.2 C11.5 20.5 11.5 19.4 12.2 18.3 L16.8 11.2" fill="none" stroke="#444" stroke-width="1.6" stroke-linecap="round"/></svg></div></div>
<div class="row a s" style="top:273px;height:33px;line-height:31.6px"><div class="c c0" style="left:0px;width:67px"><span class="cb"></span></div><div class="c c1" style="left:67px;width:103px"><svg style="left:3.3px;top:2px" width="28" height="30" viewBox="0 0 28 30"><path d="M12.2 3.0 H20.4 L25.4 8.0 V20.3 Q25.4 22.5 23.2 22.5 H12.2 Q10.0 22.5 10.0 20.3 V5.2 Q10.0 3.0 12.2 3.0 Z" fill="#fffef4" stroke="#333" stroke-width="1.5" stroke-linejoin="round"/><path d="M20.4 3.0 V6.5 Q20.4 8.0 21.9 8.0 H25.4" fill="none" stroke="#333" stroke-width="1.35"/><path d="M5.2 7.8 H13.4 L18.4 12.8 V25.4 Q18.4 27.6 16.2 27.6 H5.2 Q3.0 27.6 3.0 25.4 V10.0 Q3.0 7.8 5.2 7.8 Z" fill="#fffef4" stroke="#333" stroke-width="1.5" stroke-linejoin="round"/><path d="M13.4 7.8 V11.3 Q13.4 12.8 14.9 12.8 H18.4" fill="none" stroke="#333" stroke-width="1.35"/></svg></div><div class="c c2" style="left:170px;width:104px"><svg style="left:-1.5px;top:1.5px" width="32" height="30" viewBox="0 0 32 30"><path d="M12.4 7.4 V5.8 Q12.4 3.6 14.6 3.6 H22 L26.8 8.4 V14.6" fill="#fffef4" stroke="#444" stroke-width="1.5"/><path d="M22 3.6 V7 Q22 8.4 23.4 8.4 H26.8" fill="none" stroke="#444" stroke-width="1.2"/><path d="M15.6 26.5 H8.6 Q6.4 26.5 6.4 24.3 V10.2 Q6.4 8 8.6 8 H15.8 L20.6 12.8 V15.6" fill="#fffef4" stroke="#e8141c" stroke-width="1.5"/><path d="M15.8 8 V11.4 Q15.8 12.8 17.2 12.8 H20.6" fill="none" stroke="#e8141c" stroke-width="1.3"/><path d="M17.3 21.4 L24.4 15.5 L24 19.2 C28.4 19.5 32 22.4 32.3 28.3 C30.4 25.2 27.8 24 23.9 24 L24.1 26.6 Z" fill="#111"/></svg></div><div class="c c3" style="left:274px;width:222px"><a class="ref" href="#">MISC000046</a></div><div class="c c4" style="left:496px;width:222px">02 May 2024</div><div class="c c5" style="left:718px;width:222px"></div><div class="c c6" style="left:940px;width:223px"><svg style="left:3px;top:4px" width="32" height="30" viewBox="0 0 32 30"><path d="M6.2 2.9 H22.8 Q26.1 2.9 26.1 6.2 V13.5 Q26.1 16.8 22.8 16.8 H21.3 V24.1 L14.4 16.8 H6.2 Q2.9 16.8 2.9 13.5 V6.2 Q2.9 2.9 6.2 2.9 Z" fill="#fffdd3" stroke="#111" stroke-width="1.9" stroke-linejoin="round"/></svg></div><div class="c c7" style="left:1163px;width:222px">Aqilla Support</div><div class="c c8" style="left:1385px;width:187px"></div><div class="c c9" style="left:1572px;width:219px"><svg style="left:1.5px;top:2.4px" width="26" height="30" viewBox="0 0 26 30"><path d="M23.9 11.4 L15.3 24.2 C13.6 26.8 10.6 27.4 8.9 26.2 C7 24.9 6.7 22.6 8.2 20.2 L18.4 4.7 C19.6 2.8 21.6 2.3 23.2 3.3 C24.8 4.4 25.1 6.3 24 8 L15.8 20.2 C14.9 21.6 13.4 22 12.4 21.2 C11.5 20.5 11.5 19.4 12.2 18.3 L16.8 11.2" fill="none" stroke="#444" stroke-width="1.6" stroke-linecap="round"/></svg></div></div>
<div class="row b" style="top:306px;height:35px;line-height:33.6px"><div class="c c0" style="left:0px;width:67px"><span class="cb"></span></div><div class="c c1" style="left:67px;width:103px"><svg style="left:3.3px;top:2px" width="28" height="30" viewBox="0 0 28 30"><path d="M12.2 3.0 H20.4 L25.4 8.0 V20.3 Q25.4 22.5 23.2 22.5 H12.2 Q10.0 22.5 10.0 20.3 V5.2 Q10.0 3.0 12.2 3.0 Z" fill="#fffef4" stroke="#333" stroke-width="1.5" stroke-linejoin="round"/><path d="M20.4 3.0 V6.5 Q20.4 8.0 21.9 8.0 H25.4" fill="none" stroke="#333" stroke-width="1.35"/><path d="M5.2 7.8 H13.4 L18.4 12.8 V25.4 Q18.4 27.6 16.2 27.6 H5.2 Q3.0 27.6 3.0 25.4 V10.0 Q3.0 7.8 5.2 7.8 Z" fill="#fffef4" stroke="#333" stroke-width="1.5" stroke-linejoin="round"/><path d="M13.4 7.8 V11.3 Q13.4 12.8 14.9 12.8 H18.4" fill="none" stroke="#333" stroke-width="1.35"/></svg></div><div class="c c2" style="left:170px;width:104px"><svg style="left:-1.5px;top:1.5px" width="32" height="30" viewBox="0 0 32 30"><path d="M12.4 7.4 V5.8 Q12.4 3.6 14.6 3.6 H22 L26.8 8.4 V14.6" fill="#fffef4" stroke="#444" stroke-width="1.5"/><path d="M22 3.6 V7 Q22 8.4 23.4 8.4 H26.8" fill="none" stroke="#444" stroke-width="1.2"/><path d="M15.6 26.5 H8.6 Q6.4 26.5 6.4 24.3 V10.2 Q6.4 8 8.6 8 H15.8 L20.6 12.8 V15.6" fill="#fffef4" stroke="#e8141c" stroke-width="1.5"/><path d="M15.8 8 V11.4 Q15.8 12.8 17.2 12.8 H20.6" fill="none" stroke="#e8141c" stroke-width="1.3"/><path d="M17.3 21.4 L24.4 15.5 L24 19.2 C28.4 19.5 32 22.4 32.3 28.3 C30.4 25.2 27.8 24 23.9 24 L24.1 26.6 Z" fill="#111"/></svg></div><div class="c c3" style="left:274px;width:222px"><a class="ref" href="#">MISC000040</a></div><div class="c c4" style="left:496px;width:222px">09 Apr 2024</div><div class="c c5" style="left:718px;width:222px">400.00</div><div class="c c6" style="left:940px;width:223px"><svg style="left:3px;top:4px" width="32" height="30" viewBox="0 0 32 30"><path d="M6.2 2.9 H22.8 Q26.1 2.9 26.1 6.2 V13.5 Q26.1 16.8 22.8 16.8 H21.3 V24.1 L14.4 16.8 H6.2 Q2.9 16.8 2.9 13.5 V6.2 Q2.9 2.9 6.2 2.9 Z" fill="#fffdd3" stroke="#111" stroke-width="1.9" stroke-linejoin="round"/></svg></div><div class="c c7" style="left:1163px;width:222px">Aqilla Support</div><div class="c c8" style="left:1385px;width:187px">31 Mar 2024</div><div class="c c9" style="left:1572px;width:219px"></div></div>
<div class="row a s" style="top:341px;height:33px;line-height:31.6px"><div class="c c0" style="left:0px;width:67px"><span class="cb"></span></div><div class="c c1" style="left:67px;width:103px"><svg style="left:3.3px;top:2px" width="28" height="30" viewBox="0 0 28 30"><path d="M12.2 3.0 H20.4 L25.4 8.0 V20.3 Q25.4 22.5 23.2 22.5 H12.2 Q10.0 22.5 10.0 20.3 V5.2 Q10.0 3.0 12.2 3.0 Z" fill="#fffef4" stroke="#333" stroke-width="1.5" stroke-linejoin="round"/><path d="M20.4 3.0 V6.5 Q20.4 8.0 21.9 8.0 H25.4" fill="none" stroke="#333" stroke-width="1.35"/><path d="M5.2 7.8 H13.4 L18.4 12.8 V25.4 Q18.4 27.6 16.2 27.6 H5.2 Q3.0 27.6 3.0 25.4 V10.0 Q3.0 7.8 5.2 7.8 Z" fill="#fffef4" stroke="#333" stroke-width="1.5" stroke-linejoin="round"/><path d="M13.4 7.8 V11.3 Q13.4 12.8 14.9 12.8 H18.4" fill="none" stroke="#333" stroke-width="1.35"/></svg></div><div class="c c2" style="left:170px;width:104px"><svg style="left:-1.5px;top:1.5px" width="32" height="30" viewBox="0 0 32 30"><path d="M12.4 7.4 V5.8 Q12.4 3.6 14.6 3.6 H22 L26.8 8.4 V14.6" fill="#fffef4" stroke="#444" stroke-width="1.5"/><path d="M22 3.6 V7 Q22 8.4 23.4 8.4 H26.8" fill="none" stroke="#444" stroke-width="1.2"/><path d="M15.6 26.5 H8.6 Q6.4 26.5 6.4 24.3 V10.2 Q6.4 8 8.6 8 H15.8 L20.6 12.8 V15.6" fill="#fffef4" stroke="#e8141c" stroke-width="1.5"/><path d="M15.8 8 V11.4 Q15.8 12.8 17.2 12.8 H20.6" fill="none" stroke="#e8141c" stroke-width="1.3"/><path d="M17.3 21.4 L24.4 15.5 L24 19.2 C28.4 19.5 32 22.4 32.3 28.3 C30.4 25.2 27.8 24 23.9 24 L24.1 26.6 Z" fill="#111"/></svg></div><div class="c c3" style="left:274px;width:222px"><a class="ref" href="#">MISC000042</a></div><div class="c c4" style="left:496px;width:222px">09 Apr 2024</div><div class="c c5" style="left:718px;width:222px"></div><div class="c c6" style="left:940px;width:223px"><svg style="left:3px;top:4px" width="32" height="30" viewBox="0 0 32 30"><path d="M6.2 2.9 H22.8 Q26.1 2.9 26.1 6.2 V13.5 Q26.1 16.8 22.8 16.8 H21.3 V24.1 L14.4 16.8 H6.2 Q2.9 16.8 2.9 13.5 V6.2 Q2.9 2.9 6.2 2.9 Z" fill="#fffdd3" stroke="#111" stroke-width="1.9" stroke-linejoin="round"/></svg></div><div class="c c7" style="left:1163px;width:222px">Aqilla Support</div><div class="c c8" style="left:1385px;width:187px"></div><div class="c c9" style="left:1572px;width:219px"><svg style="left:1.5px;top:2.4px" width="26" height="30" viewBox="0 0 26 30"><path d="M23.9 11.4 L15.3 24.2 C13.6 26.8 10.6 27.4 8.9 26.2 C7 24.9 6.7 22.6 8.2 20.2 L18.4 4.7 C19.6 2.8 21.6 2.3 23.2 3.3 C24.8 4.4 25.1 6.3 24 8 L15.8 20.2 C14.9 21.6 13.4 22 12.4 21.2 C11.5 20.5 11.5 19.4 12.2 18.3 L16.8 11.2" fill="none" stroke="#444" stroke-width="1.6" stroke-linecap="round"/></svg></div></div>
<div class="row b" style="top:374px;height:35px;line-height:33.6px"><div class="c c0" style="left:0px;width:67px"><span class="cb"></span></div><div class="c c1" style="left:67px;width:103px"><svg style="left:3.3px;top:2px" width="28" height="30" viewBox="0 0 28 30"><path d="M12.2 3.0 H20.4 L25.4 8.0 V20.3 Q25.4 22.5 23.2 22.5 H12.2 Q10.0 22.5 10.0 20.3 V5.2 Q10.0 3.0 12.2 3.0 Z" fill="#fffef4" stroke="#333" stroke-width="1.5" stroke-linejoin="round"/><path d="M20.4 3.0 V6.5 Q20.4 8.0 21.9 8.0 H25.4" fill="none" stroke="#333" stroke-width="1.35"/><path d="M5.2 7.8 H13.4 L18.4 12.8 V25.4 Q18.4 27.6 16.2 27.6 H5.2 Q3.0 27.6 3.0 25.4 V10.0 Q3.0 7.8 5.2 7.8 Z" fill="#fffef4" stroke="#333" stroke-width="1.5" stroke-linejoin="round"/><path d="M13.4 7.8 V11.3 Q13.4 12.8 14.9 12.8 H18.4" fill="none" stroke="#333" stroke-width="1.35"/></svg></div><div class="c c2" style="left:170px;width:104px"><svg style="left:-1.5px;top:1.5px" width="32" height="30" viewBox="0 0 32 30"><path d="M12.4 7.4 V5.8 Q12.4 3.6 14.6 3.6 H22 L26.8 8.4 V14.6" fill="#fffef4" stroke="#444" stroke-width="1.5"/><path d="M22 3.6 V7 Q22 8.4 23.4 8.4 H26.8" fill="none" stroke="#444" stroke-width="1.2"/><path d="M15.6 26.5 H8.6 Q6.4 26.5 6.4 24.3 V10.2 Q6.4 8 8.6 8 H15.8 L20.6 12.8 V15.6" fill="#fffef4" stroke="#e8141c" stroke-width="1.5"/><path d="M15.8 8 V11.4 Q15.8 12.8 17.2 12.8 H20.6" fill="none" stroke="#e8141c" stroke-width="1.3"/><path d="M17.3 21.4 L24.4 15.5 L24 19.2 C28.4 19.5 32 22.4 32.3 28.3 C30.4 25.2 27.8 24 23.9 24 L24.1 26.6 Z" fill="#111"/></svg></div><div class="c c3" style="left:274px;width:222px"><a class="ref" href="#">MISC000043</a></div><div class="c c4" style="left:496px;width:222px">09 Apr 2024</div><div class="c c5" style="left:718px;width:222px">0.00</div><div class="c c6" style="left:940px;width:223px"><svg style="left:3px;top:4px" width="32" height="30" viewBox="0 0 32 30"><path d="M6.2 2.9 H22.8 Q26.1 2.9 26.1 6.2 V13.5 Q26.1 16.8 22.8 16.8 H21.3 V24.1 L14.4 16.8 H6.2 Q2.9 16.8 2.9 13.5 V6.2 Q2.9 2.9 6.2 2.9 Z" fill="#fffdd3" stroke="#111" stroke-width="1.9" stroke-linejoin="round"/></svg></div><div class="c c7" style="left:1163px;width:222px">Aqilla Support</div><div class="c c8" style="left:1385px;width:187px"></div><div class="c c9" style="left:1572px;width:219px"><svg style="left:1.5px;top:2.4px" width="26" height="30" viewBox="0 0 26 30"><path d="M23.9 11.4 L15.3 24.2 C13.6 26.8 10.6 27.4 8.9 26.2 C7 24.9 6.7 22.6 8.2 20.2 L18.4 4.7 C19.6 2.8 21.6 2.3 23.2 3.3 C24.8 4.4 25.1 6.3 24 8 L15.8 20.2 C14.9 21.6 13.4 22 12.4 21.2 C11.5 20.5 11.5 19.4 12.2 18.3 L16.8 11.2" fill="none" stroke="#444" stroke-width="1.6" stroke-linecap="round"/></svg></div></div>
<div class="row a" style="top:409px;height:36px;line-height:34.6px"><div class="c c0" style="left:0px;width:67px"><span class="cb"></span></div><div class="c c1" style="left:67px;width:103px"><svg style="left:3.3px;top:2px" width="28" height="30" viewBox="0 0 28 30"><path d="M12.2 3.0 H20.4 L25.4 8.0 V20.3 Q25.4 22.5 23.2 22.5 H12.2 Q10.0 22.5 10.0 20.3 V5.2 Q10.0 3.0 12.2 3.0 Z" fill="#fffef4" stroke="#333" stroke-width="1.5" stroke-linejoin="round"/><path d="M20.4 3.0 V6.5 Q20.4 8.0 21.9 8.0 H25.4" fill="none" stroke="#333" stroke-width="1.35"/><path d="M5.2 7.8 H13.4 L18.4 12.8 V25.4 Q18.4 27.6 16.2 27.6 H5.2 Q3.0 27.6 3.0 25.4 V10.0 Q3.0 7.8 5.2 7.8 Z" fill="#fffef4" stroke="#333" stroke-width="1.5" stroke-linejoin="round"/><path d="M13.4 7.8 V11.3 Q13.4 12.8 14.9 12.8 H18.4" fill="none" stroke="#333" stroke-width="1.35"/></svg></div><div class="c c2" style="left:170px;width:104px"><svg style="left:-1.5px;top:1.5px" width="32" height="30" viewBox="0 0 32 30"><path d="M12.4 7.4 V5.8 Q12.4 3.6 14.6 3.6 H22 L26.8 8.4 V14.6" fill="#fffef4" stroke="#444" stroke-width="1.5"/><path d="M22 3.6 V7 Q22 8.4 23.4 8.4 H26.8" fill="none" stroke="#444" stroke-width="1.2"/><path d="M15.6 26.5 H8.6 Q6.4 26.5 6.4 24.3 V10.2 Q6.4 8 8.6 8 H15.8 L20.6 12.8 V15.6" fill="#fffef4" stroke="#e8141c" stroke-width="1.5"/><path d="M15.8 8 V11.4 Q15.8 12.8 17.2 12.8 H20.6" fill="none" stroke="#e8141c" stroke-width="1.3"/><path d="M17.3 21.4 L24.4 15.5 L24 19.2 C28.4 19.5 32 22.4 32.3 28.3 C30.4 25.2 27.8 24 23.9 24 L24.1 26.6 Z" fill="#111"/></svg></div><div class="c c3" style="left:274px;width:222px"><a class="ref" href="#">MISC000044</a></div><div class="c c4" style="left:496px;width:222px">09 Apr 2024</div><div class="c c5" style="left:718px;width:222px">0.00</div><div class="c c6" style="left:940px;width:223px"><svg style="left:3px;top:4px" width="32" height="30" viewBox="0 0 32 30"><path d="M6.2 2.9 H22.8 Q26.1 2.9 26.1 6.2 V13.5 Q26.1 16.8 22.8 16.8 H21.3 V24.1 L14.4 16.8 H6.2 Q2.9 16.8 2.9 13.5 V6.2 Q2.9 2.9 6.2 2.9 Z" fill="#fffdd3" stroke="#111" stroke-width="1.9" stroke-linejoin="round"/></svg></div><div class="c c7" style="left:1163px;width:222px">Aqilla Support</div><div class="c c8" style="left:1385px;width:187px"></div><div class="c c9" style="left:1572px;width:219px"><svg style="left:1.5px;top:2.4px" width="26" height="30" viewBox="0 0 26 30"><path d="M23.9 11.4 L15.3 24.2 C13.6 26.8 10.6 27.4 8.9 26.2 C7 24.9 6.7 22.6 8.2 20.2 L18.4 4.7 C19.6 2.8 21.6 2.3 23.2 3.3 C24.8 4.4 25.1 6.3 24 8 L15.8 20.2 C14.9 21.6 13.4 22 12.4 21.2 C11.5 20.5 11.5 19.4 12.2 18.3 L16.8 11.2" fill="none" stroke="#444" stroke-width="1.6" stroke-linecap="round"/></svg></div></div>
<div class="row b" style="top:445px;height:35px;line-height:33.6px"><div class="c c0" style="left:0px;width:67px"><span class="cb"></span></div><div class="c c1" style="left:67px;width:103px"><svg style="left:3.3px;top:2px" width="28" height="30" viewBox="0 0 28 30"><path d="M12.2 3.0 H20.4 L25.4 8.0 V20.3 Q25.4 22.5 23.2 22.5 H12.2 Q10.0 22.5 10.0 20.3 V5.2 Q10.0 3.0 12.2 3.0 Z" fill="#fffef4" stroke="#333" stroke-width="1.5" stroke-linejoin="round"/><path d="M20.4 3.0 V6.5 Q20.4 8.0 21.9 8.0 H25.4" fill="none" stroke="#333" stroke-width="1.35"/><path d="M5.2 7.8 H13.4 L18.4 12.8 V25.4 Q18.4 27.6 16.2 27.6 H5.2 Q3.0 27.6 3.0 25.4 V10.0 Q3.0 7.8 5.2 7.8 Z" fill="#fffef4" stroke="#333" stroke-width="1.5" stroke-linejoin="round"/><path d="M13.4 7.8 V11.3 Q13.4 12.8 14.9 12.8 H18.4" fill="none" stroke="#333" stroke-width="1.35"/></svg></div><div class="c c2" style="left:170px;width:104px"><svg style="left:-1.5px;top:1.5px" width="32" height="30" viewBox="0 0 32 30"><path d="M12.4 7.4 V5.8 Q12.4 3.6 14.6 3.6 H22 L26.8 8.4 V14.6" fill="#fffef4" stroke="#444" stroke-width="1.5"/><path d="M22 3.6 V7 Q22 8.4 23.4 8.4 H26.8" fill="none" stroke="#444" stroke-width="1.2"/><path d="M15.6 26.5 H8.6 Q6.4 26.5 6.4 24.3 V10.2 Q6.4 8 8.6 8 H15.8 L20.6 12.8 V15.6" fill="#fffef4" stroke="#e8141c" stroke-width="1.5"/><path d="M15.8 8 V11.4 Q15.8 12.8 17.2 12.8 H20.6" fill="none" stroke="#e8141c" stroke-width="1.3"/><path d="M17.3 21.4 L24.4 15.5 L24 19.2 C28.4 19.5 32 22.4 32.3 28.3 C30.4 25.2 27.8 24 23.9 24 L24.1 26.6 Z" fill="#111"/></svg></div><div class="c c3" style="left:274px;width:222px"><a class="ref" href="#">MISC000047</a></div><div class="c c4" style="left:496px;width:222px">09 Apr 2024</div><div class="c c5" style="left:718px;width:222px">400.00</div><div class="c c6" style="left:940px;width:223px"><svg style="left:3px;top:4px" width="32" height="30" viewBox="0 0 32 30"><path d="M6.2 2.9 H22.8 Q26.1 2.9 26.1 6.2 V13.5 Q26.1 16.8 22.8 16.8 H21.3 V24.1 L14.4 16.8 H6.2 Q2.9 16.8 2.9 13.5 V6.2 Q2.9 2.9 6.2 2.9 Z" fill="#fffdd3" stroke="#111" stroke-width="1.9" stroke-linejoin="round"/></svg></div><div class="c c7" style="left:1163px;width:222px">Aqilla Support</div><div class="c c8" style="left:1385px;width:187px">31 May 2024</div><div class="c c9" style="left:1572px;width:219px"></div></div>
<div class="row a" style="top:480px;height:36px;line-height:34.6px"><div class="c c0" style="left:0px;width:67px"><span class="cb"></span></div><div class="c c1" style="left:67px;width:103px"><svg style="left:3.3px;top:2px" width="28" height="30" viewBox="0 0 28 30"><path d="M12.2 3.0 H20.4 L25.4 8.0 V20.3 Q25.4 22.5 23.2 22.5 H12.2 Q10.0 22.5 10.0 20.3 V5.2 Q10.0 3.0 12.2 3.0 Z" fill="#fffef4" stroke="#333" stroke-width="1.5" stroke-linejoin="round"/><path d="M20.4 3.0 V6.5 Q20.4 8.0 21.9 8.0 H25.4" fill="none" stroke="#333" stroke-width="1.35"/><path d="M5.2 7.8 H13.4 L18.4 12.8 V25.4 Q18.4 27.6 16.2 27.6 H5.2 Q3.0 27.6 3.0 25.4 V10.0 Q3.0 7.8 5.2 7.8 Z" fill="#fffef4" stroke="#333" stroke-width="1.5" stroke-linejoin="round"/><path d="M13.4 7.8 V11.3 Q13.4 12.8 14.9 12.8 H18.4" fill="none" stroke="#333" stroke-width="1.35"/></svg></div><div class="c c2" style="left:170px;width:104px"><svg style="left:-1.5px;top:1.5px" width="32" height="30" viewBox="0 0 32 30"><path d="M12.4 7.4 V5.8 Q12.4 3.6 14.6 3.6 H22 L26.8 8.4 V14.6" fill="#fffef4" stroke="#444" stroke-width="1.5"/><path d="M22 3.6 V7 Q22 8.4 23.4 8.4 H26.8" fill="none" stroke="#444" stroke-width="1.2"/><path d="M15.6 26.5 H8.6 Q6.4 26.5 6.4 24.3 V10.2 Q6.4 8 8.6 8 H15.8 L20.6 12.8 V15.6" fill="#fffef4" stroke="#e8141c" stroke-width="1.5"/><path d="M15.8 8 V11.4 Q15.8 12.8 17.2 12.8 H20.6" fill="none" stroke="#e8141c" stroke-width="1.3"/><path d="M17.3 21.4 L24.4 15.5 L24 19.2 C28.4 19.5 32 22.4 32.3 28.3 C30.4 25.2 27.8 24 23.9 24 L24.1 26.6 Z" fill="#111"/></svg></div><div class="c c3" style="left:274px;width:222px"><a class="ref" href="#">MISC000039</a></div><div class="c c4" style="left:496px;width:222px">08 Apr 2024</div><div class="c c5" style="left:718px;width:222px">1,500.00</div><div class="c c6" style="left:940px;width:223px"><svg style="left:3px;top:4px" width="32" height="30" viewBox="0 0 32 30"><path d="M6.2 2.9 H22.8 Q26.1 2.9 26.1 6.2 V13.5 Q26.1 16.8 22.8 16.8 H21.3 V24.1 L14.4 16.8 H6.2 Q2.9 16.8 2.9 13.5 V6.2 Q2.9 2.9 6.2 2.9 Z" fill="#fffdd3" stroke="#111" stroke-width="1.9" stroke-linejoin="round"/></svg></div><div class="c c7" style="left:1163px;width:222px">Aqilla Support</div><div class="c c8" style="left:1385px;width:187px">31 Mar 2024</div><div class="c c9" style="left:1572px;width:219px"></div></div>
<div class="row b" style="top:516px;height:35px;line-height:33.6px"><div class="c c0" style="left:0px;width:67px"><span class="cb"></span></div><div class="c c1" style="left:67px;width:103px"><svg style="left:3.3px;top:2px" width="28" height="30" viewBox="0 0 28 30"><path d="M12.2 3.0 H20.4 L25.4 8.0 V20.3 Q25.4 22.5 23.2 22.5 H12.2 Q10.0 22.5 10.0 20.3 V5.2 Q10.0 3.0 12.2 3.0 Z" fill="#fffef4" stroke="#333" stroke-width="1.5" stroke-linejoin="round"/><path d="M20.4 3.0 V6.5 Q20.4 8.0 21.9 8.0 H25.4" fill="none" stroke="#333" stroke-width="1.35"/><path d="M5.2 7.8 H13.4 L18.4 12.8 V25.4 Q18.4 27.6 16.2 27.6 H5.2 Q3.0 27.6 3.0 25.4 V10.0 Q3.0 7.8 5.2 7.8 Z" fill="#fffef4" stroke="#333" stroke-width="1.5" stroke-linejoin="round"/><path d="M13.4 7.8 V11.3 Q13.4 12.8 14.9 12.8 H18.4" fill="none" stroke="#333" stroke-width="1.35"/></svg></div><div class="c c2" style="left:170px;width:104px"><svg style="left:-1.5px;top:1.5px" width="32" height="30" viewBox="0 0 32 30"><path d="M12.4 7.4 V5.8 Q12.4 3.6 14.6 3.6 H22 L26.8 8.4 V14.6" fill="#fffef4" stroke="#444" stroke-width="1.5"/><path d="M22 3.6 V7 Q22 8.4 23.4 8.4 H26.8" fill="none" stroke="#444" stroke-width="1.2"/><path d="M15.6 26.5 H8.6 Q6.4 26.5 6.4 24.3 V10.2 Q6.4 8 8.6 8 H15.8 L20.6 12.8 V15.6" fill="#fffef4" stroke="#e8141c" stroke-width="1.5"/><path d="M15.8 8 V11.4 Q15.8 12.8 17.2 12.8 H20.6" fill="none" stroke="#e8141c" stroke-width="1.3"/><path d="M17.3 21.4 L24.4 15.5 L24 19.2 C28.4 19.5 32 22.4 32.3 28.3 C30.4 25.2 27.8 24 23.9 24 L24.1 26.6 Z" fill="#111"/></svg></div><div class="c c3" style="left:274px;width:222px"><a class="ref" href="#">MISC000038</a></div><div class="c c4" style="left:496px;width:222px">05 Apr 2024</div><div class="c c5" style="left:718px;width:222px">0.00</div><div class="c c6" style="left:940px;width:223px"><svg style="left:3px;top:4px" width="32" height="30" viewBox="0 0 32 30"><path d="M6.2 2.9 H22.8 Q26.1 2.9 26.1 6.2 V13.5 Q26.1 16.8 22.8 16.8 H21.3 V24.1 L14.4 16.8 H6.2 Q2.9 16.8 2.9 13.5 V6.2 Q2.9 2.9 6.2 2.9 Z" fill="#fffdd3" stroke="#111" stroke-width="1.9" stroke-linejoin="round"/></svg></div><div class="c c7" style="left:1163px;width:222px">Aqilla Support</div><div class="c c8" style="left:1385px;width:187px"></div><div class="c c9" style="left:1572px;width:219px"><svg style="left:1.5px;top:2.4px" width="26" height="30" viewBox="0 0 26 30"><path d="M23.9 11.4 L15.3 24.2 C13.6 26.8 10.6 27.4 8.9 26.2 C7 24.9 6.7 22.6 8.2 20.2 L18.4 4.7 C19.6 2.8 21.6 2.3 23.2 3.3 C24.8 4.4 25.1 6.3 24 8 L15.8 20.2 C14.9 21.6 13.4 22 12.4 21.2 C11.5 20.5 11.5 19.4 12.2 18.3 L16.8 11.2" fill="none" stroke="#444" stroke-width="1.6" stroke-linecap="round"/></svg></div></div>
<div class="row a" style="top:551px;height:36px;line-height:34.6px"><div class="c c0" style="left:0px;width:67px"><span class="cb"></span></div><div class="c c1" style="left:67px;width:103px"><svg style="left:3.3px;top:2px" width="28" height="30" viewBox="0 0 28 30"><path d="M12.2 3.0 H20.4 L25.4 8.0 V20.3 Q25.4 22.5 23.2 22.5 H12.2 Q10.0 22.5 10.0 20.3 V5.2 Q10.0 3.0 12.2 3.0 Z" fill="#fffef4" stroke="#333" stroke-width="1.5" stroke-linejoin="round"/><path d="M20.4 3.0 V6.5 Q20.4 8.0 21.9 8.0 H25.4" fill="none" stroke="#333" stroke-width="1.35"/><path d="M5.2 7.8 H13.4 L18.4 12.8 V25.4 Q18.4 27.6 16.2 27.6 H5.2 Q3.0 27.6 3.0 25.4 V10.0 Q3.0 7.8 5.2 7.8 Z" fill="#fffef4" stroke="#333" stroke-width="1.5" stroke-linejoin="round"/><path d="M13.4 7.8 V11.3 Q13.4 12.8 14.9 12.8 H18.4" fill="none" stroke="#333" stroke-width="1.35"/></svg></div><div class="c c2" style="left:170px;width:104px"><svg style="left:-1.5px;top:1.5px" width="32" height="30" viewBox="0 0 32 30"><path d="M12.4 7.4 V5.8 Q12.4 3.6 14.6 3.6 H22 L26.8 8.4 V14.6" fill="#fffef4" stroke="#444" stroke-width="1.5"/><path d="M22 3.6 V7 Q22 8.4 23.4 8.4 H26.8" fill="none" stroke="#444" stroke-width="1.2"/><path d="M15.6 26.5 H8.6 Q6.4 26.5 6.4 24.3 V10.2 Q6.4 8 8.6 8 H15.8 L20.6 12.8 V15.6" fill="#fffef4" stroke="#e8141c" stroke-width="1.5"/><path d="M15.8 8 V11.4 Q15.8 12.8 17.2 12.8 H20.6" fill="none" stroke="#e8141c" stroke-width="1.3"/><path d="M17.3 21.4 L24.4 15.5 L24 19.2 C28.4 19.5 32 22.4 32.3 28.3 C30.4 25.2 27.8 24 23.9 24 L24.1 26.6 Z" fill="#111"/></svg></div><div class="c c3" style="left:274px;width:222px"><a class="ref" href="#">MISC000035</a></div><div class="c c4" style="left:496px;width:222px">03 Apr 2024</div><div class="c c5" style="left:718px;width:222px">100.00</div><div class="c c6" style="left:940px;width:223px"><svg style="left:3px;top:4px" width="32" height="30" viewBox="0 0 32 30"><path d="M6.2 2.9 H22.8 Q26.1 2.9 26.1 6.2 V13.5 Q26.1 16.8 22.8 16.8 H21.3 V24.1 L14.4 16.8 H6.2 Q2.9 16.8 2.9 13.5 V6.2 Q2.9 2.9 6.2 2.9 Z" fill="#fffdd3" stroke="#111" stroke-width="1.9" stroke-linejoin="round"/></svg></div><div class="c c7" style="left:1163px;width:222px">Aqilla Support</div><div class="c c8" style="left:1385px;width:187px">31 Mar 2024</div><div class="c c9" style="left:1572px;width:219px"></div></div>
<div class="row b" style="top:587px;height:35px;line-height:33.6px"><div class="c c0" style="left:0px;width:67px"><span class="cb"></span></div><div class="c c1" style="left:67px;width:103px"><svg style="left:3.3px;top:2px" width="28" height="30" viewBox="0 0 28 30"><path d="M12.2 3.0 H20.4 L25.4 8.0 V20.3 Q25.4 22.5 23.2 22.5 H12.2 Q10.0 22.5 10.0 20.3 V5.2 Q10.0 3.0 12.2 3.0 Z" fill="#fffef4" stroke="#333" stroke-width="1.5" stroke-linejoin="round"/><path d="M20.4 3.0 V6.5 Q20.4 8.0 21.9 8.0 H25.4" fill="none" stroke="#333" stroke-width="1.35"/><path d="M5.2 7.8 H13.4 L18.4 12.8 V25.4 Q18.4 27.6 16.2 27.6 H5.2 Q3.0 27.6 3.0 25.4 V10.0 Q3.0 7.8 5.2 7.8 Z" fill="#fffef4" stroke="#333" stroke-width="1.5" stroke-linejoin="round"/><path d="M13.4 7.8 V11.3 Q13.4 12.8 14.9 12.8 H18.4" fill="none" stroke="#333" stroke-width="1.35"/></svg></div><div class="c c2" style="left:170px;width:104px"><svg style="left:-1.5px;top:1.5px" width="32" height="30" viewBox="0 0 32 30"><path d="M12.4 7.4 V5.8 Q12.4 3.6 14.6 3.6 H22 L26.8 8.4 V14.6" fill="#fffef4" stroke="#444" stroke-width="1.5"/><path d="M22 3.6 V7 Q22 8.4 23.4 8.4 H26.8" fill="none" stroke="#444" stroke-width="1.2"/><path d="M15.6 26.5 H8.6 Q6.4 26.5 6.4 24.3 V10.2 Q6.4 8 8.6 8 H15.8 L20.6 12.8 V15.6" fill="#fffef4" stroke="#e8141c" stroke-width="1.5"/><path d="M15.8 8 V11.4 Q15.8 12.8 17.2 12.8 H20.6" fill="none" stroke="#e8141c" stroke-width="1.3"/><path d="M17.3 21.4 L24.4 15.5 L24 19.2 C28.4 19.5 32 22.4 32.3 28.3 C30.4 25.2 27.8 24 23.9 24 L24.1 26.6 Z" fill="#111"/></svg></div><div class="c c3" style="left:274px;width:222px"><a class="ref" href="#">MISC000036</a></div><div class="c c4" style="left:496px;width:222px">03 Apr 2024</div><div class="c c5" style="left:718px;width:222px">0.00</div><div class="c c6" style="left:940px;width:223px"><svg style="left:3px;top:4px" width="32" height="30" viewBox="0 0 32 30"><path d="M6.2 2.9 H22.8 Q26.1 2.9 26.1 6.2 V13.5 Q26.1 16.8 22.8 16.8 H21.3 V24.1 L14.4 16.8 H6.2 Q2.9 16.8 2.9 13.5 V6.2 Q2.9 2.9 6.2 2.9 Z" fill="#fffdd3" stroke="#111" stroke-width="1.9" stroke-linejoin="round"/></svg></div><div class="c c7" style="left:1163px;width:222px">Aqilla Support</div><div class="c c8" style="left:1385px;width:187px"></div><div class="c c9" style="left:1572px;width:219px"><svg style="left:1.5px;top:2.4px" width="26" height="30" viewBox="0 0 26 30"><path d="M23.9 11.4 L15.3 24.2 C13.6 26.8 10.6 27.4 8.9 26.2 C7 24.9 6.7 22.6 8.2 20.2 L18.4 4.7 C19.6 2.8 21.6 2.3 23.2 3.3 C24.8 4.4 25.1 6.3 24 8 L15.8 20.2 C14.9 21.6 13.4 22 12.4 21.2 C11.5 20.5 11.5 19.4 12.2 18.3 L16.8 11.2" fill="none" stroke="#444" stroke-width="1.6" stroke-linecap="round"/></svg></div></div>
<div class="row a" style="top:622px;height:36px;line-height:34.6px"><div class="c c0" style="left:0px;width:67px"><span class="cb"></span></div><div class="c c1" style="left:67px;width:103px"><svg style="left:3.3px;top:2px" width="28" height="30" viewBox="0 0 28 30"><path d="M12.2 3.0 H20.4 L25.4 8.0 V20.3 Q25.4 22.5 23.2 22.5 H12.2 Q10.0 22.5 10.0 20.3 V5.2 Q10.0 3.0 12.2 3.0 Z" fill="#fffef4" stroke="#333" stroke-width="1.5" stroke-linejoin="round"/><path d="M20.4 3.0 V6.5 Q20.4 8.0 21.9 8.0 H25.4" fill="none" stroke="#333" stroke-width="1.35"/><path d="M5.2 7.8 H13.4 L18.4 12.8 V25.4 Q18.4 27.6 16.2 27.6 H5.2 Q3.0 27.6 3.0 25.4 V10.0 Q3.0 7.8 5.2 7.8 Z" fill="#fffef4" stroke="#333" stroke-width="1.5" stroke-linejoin="round"/><path d="M13.4 7.8 V11.3 Q13.4 12.8 14.9 12.8 H18.4" fill="none" stroke="#333" stroke-width="1.35"/></svg></div><div class="c c2" style="left:170px;width:104px"><svg style="left:-1.5px;top:1.5px" width="32" height="30" viewBox="0 0 32 30"><path d="M12.4 7.4 V5.8 Q12.4 3.6 14.6 3.6 H22 L26.8 8.4 V14.6" fill="#fffef4" stroke="#444" stroke-width="1.5"/><path d="M22 3.6 V7 Q22 8.4 23.4 8.4 H26.8" fill="none" stroke="#444" stroke-width="1.2"/><path d="M15.6 26.5 H8.6 Q6.4 26.5 6.4 24.3 V10.2 Q6.4 8 8.6 8 H15.8 L20.6 12.8 V15.6" fill="#fffef4" stroke="#e8141c" stroke-width="1.5"/><path d="M15.8 8 V11.4 Q15.8 12.8 17.2 12.8 H20.6" fill="none" stroke="#e8141c" stroke-width="1.3"/><path d="M17.3 21.4 L24.4 15.5 L24 19.2 C28.4 19.5 32 22.4 32.3 28.3 C30.4 25.2 27.8 24 23.9 24 L24.1 26.6 Z" fill="#111"/></svg></div><div class="c c3" style="left:274px;width:222px"><a class="ref" href="#">MISC000037</a></div><div class="c c4" style="left:496px;width:222px">03 Apr 2024</div><div class="c c5" style="left:718px;width:222px">0.00</div><div class="c c6" style="left:940px;width:223px"><svg style="left:3px;top:4px" width="32" height="30" viewBox="0 0 32 30"><path d="M6.2 2.9 H22.8 Q26.1 2.9 26.1 6.2 V13.5 Q26.1 16.8 22.8 16.8 H21.3 V24.1 L14.4 16.8 H6.2 Q2.9 16.8 2.9 13.5 V6.2 Q2.9 2.9 6.2 2.9 Z" fill="#fffdd3" stroke="#111" stroke-width="1.9" stroke-linejoin="round"/></svg></div><div class="c c7" style="left:1163px;width:222px">Aqilla Support</div><div class="c c8" style="left:1385px;width:187px"></div><div class="c c9" style="left:1572px;width:219px"><svg style="left:1.5px;top:2.4px" width="26" height="30" viewBox="0 0 26 30"><path d="M23.9 11.4 L15.3 24.2 C13.6 26.8 10.6 27.4 8.9 26.2 C7 24.9 6.7 22.6 8.2 20.2 L18.4 4.7 C19.6 2.8 21.6 2.3 23.2 3.3 C24.8 4.4 25.1 6.3 24 8 L15.8 20.2 C14.9 21.6 13.4 22 12.4 21.2 C11.5 20.5 11.5 19.4 12.2 18.3 L16.8 11.2" fill="none" stroke="#444" stroke-width="1.6" stroke-linecap="round"/></svg></div></div>
<div class="row b" style="top:658px;height:35px;line-height:33.6px"><div class="c c0" style="left:0px;width:67px"><span class="cb"></span></div><div class="c c1" style="left:67px;width:103px"><svg style="left:3.3px;top:2px" width="28" height="30" viewBox="0 0 28 30"><path d="M12.2 3.0 H20.4 L25.4 8.0 V20.3 Q25.4 22.5 23.2 22.5 H12.2 Q10.0 22.5 10.0 20.3 V5.2 Q10.0 3.0 12.2 3.0 Z" fill="#fffef4" stroke="#333" stroke-width="1.5" stroke-linejoin="round"/><path d="M20.4 3.0 V6.5 Q20.4 8.0 21.9 8.0 H25.4" fill="none" stroke="#333" stroke-width="1.35"/><path d="M5.2 7.8 H13.4 L18.4 12.8 V25.4 Q18.4 27.6 16.2 27.6 H5.2 Q3.0 27.6 3.0 25.4 V10.0 Q3.0 7.8 5.2 7.8 Z" fill="#fffef4" stroke="#333" stroke-width="1.5" stroke-linejoin="round"/><path d="M13.4 7.8 V11.3 Q13.4 12.8 14.9 12.8 H18.4" fill="none" stroke="#333" stroke-width="1.35"/></svg></div><div class="c c2" style="left:170px;width:104px"><svg style="left:-1.5px;top:1.5px" width="32" height="30" viewBox="0 0 32 30"><path d="M12.4 7.4 V5.8 Q12.4 3.6 14.6 3.6 H22 L26.8 8.4 V14.6" fill="#fffef4" stroke="#444" stroke-width="1.5"/><path d="M22 3.6 V7 Q22 8.4 23.4 8.4 H26.8" fill="none" stroke="#444" stroke-width="1.2"/><path d="M15.6 26.5 H8.6 Q6.4 26.5 6.4 24.3 V10.2 Q6.4 8 8.6 8 H15.8 L20.6 12.8 V15.6" fill="#fffef4" stroke="#e8141c" stroke-width="1.5"/><path d="M15.8 8 V11.4 Q15.8 12.8 17.2 12.8 H20.6" fill="none" stroke="#e8141c" stroke-width="1.3"/><path d="M17.3 21.4 L24.4 15.5 L24 19.2 C28.4 19.5 32 22.4 32.3 28.3 C30.4 25.2 27.8 24 23.9 24 L24.1 26.6 Z" fill="#111"/></svg></div><div class="c c3" style="left:274px;width:222px"><a class="ref" href="#">MISC000033</a></div><div class="c c4" style="left:496px;width:222px">30 Jan 2024</div><div class="c c5" style="left:718px;width:222px">0.00</div><div class="c c6" style="left:940px;width:223px"><svg style="left:3px;top:4px" width="32" height="30" viewBox="0 0 32 30"><path d="M6.2 2.9 H22.8 Q26.1 2.9 26.1 6.2 V13.5 Q26.1 16.8 22.8 16.8 H21.3 V24.1 L14.4 16.8 H6.2 Q2.9 16.8 2.9 13.5 V6.2 Q2.9 2.9 6.2 2.9 Z" fill="#fffdd3" stroke="#111" stroke-width="1.9" stroke-linejoin="round"/></svg></div><div class="c c7" style="left:1163px;width:222px">Aqilla Support</div><div class="c c8" style="left:1385px;width:187px"></div><div class="c c9" style="left:1572px;width:219px"><svg style="left:1.5px;top:2.4px" width="26" height="30" viewBox="0 0 26 30"><path d="M23.9 11.4 L15.3 24.2 C13.6 26.8 10.6 27.4 8.9 26.2 C7 24.9 6.7 22.6 8.2 20.2 L18.4 4.7 C19.6 2.8 21.6 2.3 23.2 3.3 C24.8 4.4 25.1 6.3 24 8 L15.8 20.2 C14.9 21.6 13.4 22 12.4 21.2 C11.5 20.5 11.5 19.4 12.2 18.3 L16.8 11.2" fill="none" stroke="#444" stroke-width="1.6" stroke-linecap="round"/></svg></div></div>
<div class="row a" style="top:693px;height:36px;line-height:34.6px"><div class="c c0" style="left:0px;width:67px"><span class="cb"></span></div><div class="c c1" style="left:67px;width:103px"><svg style="left:3.3px;top:2px" width="28" height="30" viewBox="0 0 28 30"><path d="M12.2 3.0 H20.4 L25.4 8.0 V20.3 Q25.4 22.5 23.2 22.5 H12.2 Q10.0 22.5 10.0 20.3 V5.2 Q10.0 3.0 12.2 3.0 Z" fill="#fffef4" stroke="#333" stroke-width="1.5" stroke-linejoin="round"/><path d="M20.4 3.0 V6.5 Q20.4 8.0 21.9 8.0 H25.4" fill="none" stroke="#333" stroke-width="1.35"/><path d="M5.2 7.8 H13.4 L18.4 12.8 V25.4 Q18.4 27.6 16.2 27.6 H5.2 Q3.0 27.6 3.0 25.4 V10.0 Q3.0 7.8 5.2 7.8 Z" fill="#fffef4" stroke="#333" stroke-width="1.5" stroke-linejoin="round"/><path d="M13.4 7.8 V11.3 Q13.4 12.8 14.9 12.8 H18.4" fill="none" stroke="#333" stroke-width="1.35"/></svg></div><div class="c c2" style="left:170px;width:104px"><svg style="left:-1.5px;top:1.5px" width="32" height="30" viewBox="0 0 32 30"><path d="M12.4 7.4 V5.8 Q12.4 3.6 14.6 3.6 H22 L26.8 8.4 V14.6" fill="#fffef4" stroke="#444" stroke-width="1.5"/><path d="M22 3.6 V7 Q22 8.4 23.4 8.4 H26.8" fill="none" stroke="#444" stroke-width="1.2"/><path d="M15.6 26.5 H8.6 Q6.4 26.5 6.4 24.3 V10.2 Q6.4 8 8.6 8 H15.8 L20.6 12.8 V15.6" fill="#fffef4" stroke="#e8141c" stroke-width="1.5"/><path d="M15.8 8 V11.4 Q15.8 12.8 17.2 12.8 H20.6" fill="none" stroke="#e8141c" stroke-width="1.3"/><path d="M17.3 21.4 L24.4 15.5 L24 19.2 C28.4 19.5 32 22.4 32.3 28.3 C30.4 25.2 27.8 24 23.9 24 L24.1 26.6 Z" fill="#111"/></svg></div><div class="c c3" style="left:274px;width:222px"><a class="ref" href="#">MISC000034</a></div><div class="c c4" style="left:496px;width:222px">30 Jan 2024</div><div class="c c5" style="left:718px;width:222px">0.00</div><div class="c c6" style="left:940px;width:223px"><svg style="left:3px;top:4px" width="32" height="30" viewBox="0 0 32 30"><path d="M6.2 2.9 H22.8 Q26.1 2.9 26.1 6.2 V13.5 Q26.1 16.8 22.8 16.8 H21.3 V24.1 L14.4 16.8 H6.2 Q2.9 16.8 2.9 13.5 V6.2 Q2.9 2.9 6.2 2.9 Z" fill="#fffdd3" stroke="#111" stroke-width="1.9" stroke-linejoin="round"/></svg></div><div class="c c7" style="left:1163px;width:222px">Aqilla Support</div><div class="c c8" style="left:1385px;width:187px"></div><div class="c c9" style="left:1572px;width:219px"><svg style="left:1.5px;top:2.4px" width="26" height="30" viewBox="0 0 26 30"><path d="M23.9 11.4 L15.3 24.2 C13.6 26.8 10.6 27.4 8.9 26.2 C7 24.9 6.7 22.6 8.2 20.2 L18.4 4.7 C19.6 2.8 21.6 2.3 23.2 3.3 C24.8 4.4 25.1 6.3 24 8 L15.8 20.2 C14.9 21.6 13.4 22 12.4 21.2 C11.5 20.5 11.5 19.4 12.2 18.3 L16.8 11.2" fill="none" stroke="#444" stroke-width="1.6" stroke-linecap="round"/></svg></div></div>
<div class="row b" style="top:729px;height:35px;line-height:33.6px"><div class="c c0" style="left:0px;width:67px"><span class="cb"></span></div><div class="c c1" style="left:67px;width:103px"><svg style="left:3.3px;top:2px" width="28" height="30" viewBox="0 0 28 30"><path d="M12.2 3.0 H20.4 L25.4 8.0 V20.3 Q25.4 22.5 23.2 22.5 H12.2 Q10.0 22.5 10.0 20.3 V5.2 Q10.0 3.0 12.2 3.0 Z" fill="#fffef4" stroke="#333" stroke-width="1.5" stroke-linejoin="round"/><path d="M20.4 3.0 V6.5 Q20.4 8.0 21.9 8.0 H25.4" fill="none" stroke="#333" stroke-width="1.35"/><path d="M5.2 7.8 H13.4 L18.4 12.8 V25.4 Q18.4 27.6 16.2 27.6 H5.2 Q3.0 27.6 3.0 25.4 V10.0 Q3.0 7.8 5.2 7.8 Z" fill="#fffef4" stroke="#333" stroke-width="1.5" stroke-linejoin="round"/><path d="M13.4 7.8 V11.3 Q13.4 12.8 14.9 12.8 H18.4" fill="none" stroke="#333" stroke-width="1.35"/></svg></div><div class="c c2" style="left:170px;width:104px"><svg style="left:-1.5px;top:1.5px" width="32" height="30" viewBox="0 0 32 30"><path d="M12.4 7.4 V5.8 Q12.4 3.6 14.6 3.6 H22 L26.8 8.4 V14.6" fill="#fffef4" stroke="#444" stroke-width="1.5"/><path d="M22 3.6 V7 Q22 8.4 23.4 8.4 H26.8" fill="none" stroke="#444" stroke-width="1.2"/><path d="M15.6 26.5 H8.6 Q6.4 26.5 6.4 24.3 V10.2 Q6.4 8 8.6 8 H15.8 L20.6 12.8 V15.6" fill="#fffef4" stroke="#e8141c" stroke-width="1.5"/><path d="M15.8 8 V11.4 Q15.8 12.8 17.2 12.8 H20.6" fill="none" stroke="#e8141c" stroke-width="1.3"/><path d="M17.3 21.4 L24.4 15.5 L24 19.2 C28.4 19.5 32 22.4 32.3 28.3 C30.4 25.2 27.8 24 23.9 24 L24.1 26.6 Z" fill="#111"/></svg></div><div class="c c3" style="left:274px;width:222px"><a class="ref" href="#">MISC000045</a></div><div class="c c4" style="left:496px;width:222px">10 Jan 2024</div><div class="c c5" style="left:718px;width:222px">1,999.00</div><div class="c c6" style="left:940px;width:223px"><svg style="left:3px;top:4px" width="32" height="30" viewBox="0 0 32 30"><path d="M6.2 2.9 H22.8 Q26.1 2.9 26.1 6.2 V13.5 Q26.1 16.8 22.8 16.8 H21.3 V24.1 L14.4 16.8 H6.2 Q2.9 16.8 2.9 13.5 V6.2 Q2.9 2.9 6.2 2.9 Z" fill="#fffdd3" stroke="#111" stroke-width="1.9" stroke-linejoin="round"/></svg></div><div class="c c7" style="left:1163px;width:222px">Aqilla Support</div><div class="c c8" style="left:1385px;width:187px">31 Mar 2024</div><div class="c c9" style="left:1572px;width:219px"></div></div>
</div>
<div class="pbtn dis" style="left:688px;width:149px"><svg style="left:66.6px;top:17px" width="18" height="18" viewBox="0 0 18 18"><path d="M1.2 1 H4.4 V17 H1.2 Z M16 1 V17 L6 9 Z" fill="#fff"/></svg></div>
<div class="pbtn dis" style="left:854px"><svg style="left:69px;top:17px" width="14" height="18" viewBox="0 0 14 18"><path d="M11.5 1 V17 L2.5 9 Z" fill="#fff"/></svg></div>
<span class="pg">Page 1 of 2</span>
<div class="pbtn" style="left:1209px;width:149px"><svg style="left:64.8px;top:17px" width="14" height="18" viewBox="0 0 14 18"><path d="M2.5 1 V17 L11.5 9 Z" fill="#fff"/></svg></div>
<div class="pbtn" style="left:1387px"><svg style="left:64px;top:17px" width="18" height="18" viewBox="0 0 18 18"><path d="M13.6 1 H16.8 V17 H13.6 Z M2 1 V17 L12 9 Z" fill="#fff"/></svg></div>
<div class="pin">1</div>
<div class="pbtn" style="left:1742px;width:149px"><span class="goto">Go To</span></div>
</body></html>
